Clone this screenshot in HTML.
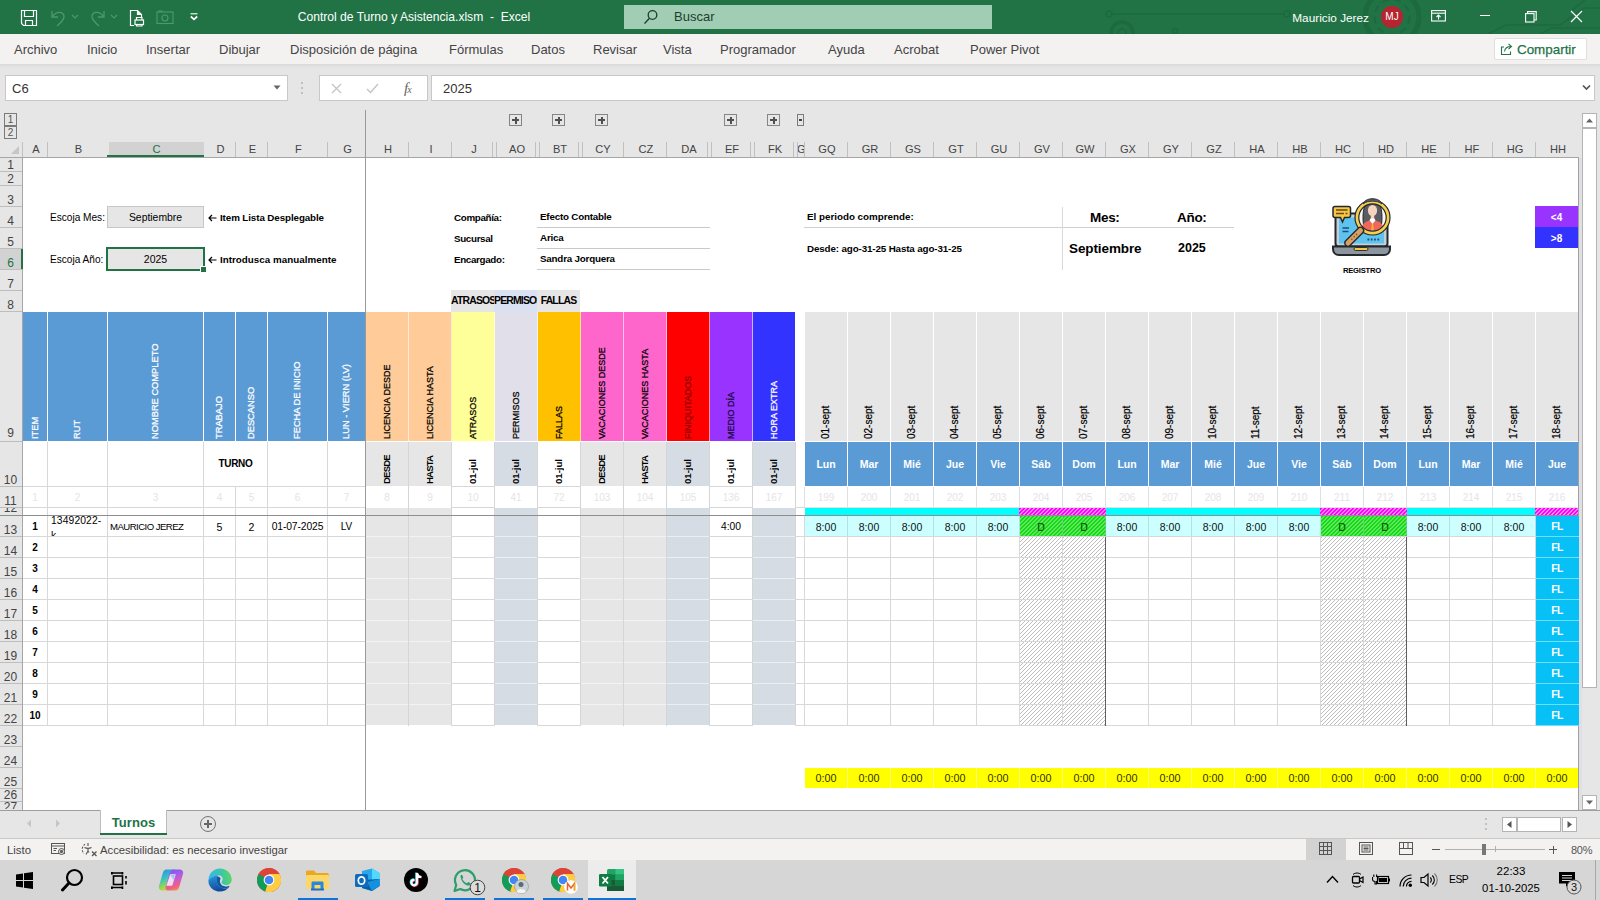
<!DOCTYPE html>
<html lang="es"><head><meta charset="utf-8"><title>Control de Turno y Asistencia.xlsm - Excel</title>
<style>
html,body{margin:0;padding:0;background:#fff;}
body{width:1600px;height:900px;overflow:hidden;position:relative;font-family:"Liberation Sans",sans-serif;color:#000;}
#app{position:absolute;left:0;top:0;width:1600px;height:900px;overflow:hidden;}
#app div{position:absolute;white-space:nowrap;}
#app i{display:block;}
.vt{writing-mode:vertical-rl;transform:rotate(180deg);text-align:left;white-space:nowrap;overflow:visible;}
</style></head>
<body><div id="app">
<div style="left:0px;top:0px;width:1600px;height:34px;background:#217346;"></div>
<svg style="position:absolute;left:1080px;top:0" width="520" height="34" viewBox="1080 0 520 34" fill="none" stroke="#1c6a3e" stroke-width="1.6">
<circle cx="1109" cy="14" r="3"/><path d="M1112 14H1284"/><circle cx="1287" cy="14" r="3"/>
<circle cx="1122" cy="33" r="11" stroke-width="3.5"/><circle cx="1122" cy="33" r="4"/><circle cx="1175" cy="31" r="2.5"/>
<circle cx="1392" cy="17" r="27" stroke-width="5"/><circle cx="1392" cy="17" r="17.5" stroke-width="2" stroke-dasharray="7 5"/>
<path d="M1488 34L1506 25H1560L1584 8H1600"/><path d="M1540 34L1552 28H1600"/><path d="M1585 0L1572 10"/></svg>
<svg style="position:absolute;left:20px;top:9px" width="18" height="18" viewBox="0 0 18 18" fill="none" stroke="#fff" stroke-width="1.2">
<path d="M1.5 1.5H16.5V16.5H3.5L1.5 14.5Z"/><path d="M4.5 1.5V7.5H13.5V1.5"/><path d="M5.5 16.5V11.5H12.5V16.5"/></svg>
<svg style="position:absolute;left:50px;top:9px" width="30" height="18" viewBox="0 0 30 18" fill="none" stroke="#4f9671" stroke-width="1.3">
<path d="M2 2V8H8"/><path d="M2.5 7.5C6 2 13 2 14 7C14.6 11 10 14 7 17"/><path d="M22 6L25 9L28 6" stroke-width="1.1"/></svg>
<svg style="position:absolute;left:88px;top:9px" width="32" height="18" viewBox="0 0 32 18" fill="none" stroke="#4f9671" stroke-width="1.3">
<path d="M16 2V8H10"/><path d="M15.5 7.5C12 2 5 2 4 7C3.4 11 8 14 11 17"/><path d="M23 6L26 9L29 6" stroke-width="1.1"/></svg>
<svg style="position:absolute;left:129px;top:9px" width="16" height="18" viewBox="0 0 16 18" fill="none" stroke="#fff" stroke-width="1.2">
<path d="M5 16.5H1.5V1.5H8.5L12.5 5.5V8"/><path d="M8.5 1.5V5.5H12.5" fill="#fff"/><rect x="6" y="11" width="8.5" height="4.5"/><path d="M7.5 11V8.5H13V11"/><path d="M7.5 15.5V17H13V15.5"/></svg>
<svg style="position:absolute;left:156px;top:10px" width="18" height="15" viewBox="0 0 18 15" fill="none" stroke="#4f9872" stroke-width="1.1">
<rect x="1" y="2" width="16" height="11.5"/><circle cx="9" cy="8" r="3"/><path d="M3 2V1H6V2"/></svg>
<svg style="position:absolute;left:189px;top:13px" width="10" height="8" viewBox="0 0 10 8" fill="none" stroke="#fff"><path d="M1.5 0.8H8.5" stroke-width="1.1"/><path d="M1.8 3.5L5 6.3L8.2 3.5" stroke-width="1.7"/></svg>
<div style="left:260px;top:7px;width:308px;height:20px;color:#fff;font-size:12.1px;line-height:20px;text-align:center;white-space:pre;">Control de Turno y Asistencia.xlsm  -  Excel</div>
<div style="left:624px;top:5px;width:368px;height:24px;background:#a0cdb4;"></div>
<svg style="position:absolute;left:643px;top:9px" width="16" height="16" viewBox="0 0 16 16" fill="none" stroke="#1f3d2d" stroke-width="1.3"><circle cx="9.5" cy="6" r="4.3"/><path d="M6.5 9.2L1.5 14.5"/></svg>
<div style="left:674px;top:7px;width:80px;height:20px;color:#1f3d2d;font-size:13px;line-height:20px;">Buscar</div>
<div style="left:1279px;top:8px;width:90px;height:20px;color:#fff;font-size:11.8px;line-height:20px;text-align:right;">Mauricio Jerez</div>
<div style="left:1381px;top:6px;width:22px;height:22px;background:#b5242f;border-radius:50%;color:#fff;font-size:10px;line-height:22px;text-align:center;">MJ</div>
<svg style="position:absolute;left:1431px;top:10px" width="15" height="12" viewBox="0 0 15 12" fill="none" stroke="#fff" stroke-width="1.1"><rect x="0.6" y="0.6" width="13.8" height="10.4"/><path d="M0.6 3.2H14.4"/><path d="M7.5 9.5V5M5.5 7L7.5 5L9.5 7"/></svg>
<div style="left:1480px;top:15px;width:10px;height:1px;background:#fff;"></div>
<svg style="position:absolute;left:1525px;top:11px" width="12" height="12" viewBox="0 0 12 12" fill="none" stroke="#fff" stroke-width="1.1"><rect x="0.6" y="2.6" width="8.4" height="8.4"/><path d="M2.6 2.6V0.6H11.2V9H9"/></svg>
<svg style="position:absolute;left:1570px;top:10px" width="13" height="13" viewBox="0 0 13 13" fill="none" stroke="#fff" stroke-width="1.2"><path d="M1 1L12 12M12 1L1 12"/></svg>
<div style="left:0px;top:34px;width:1600px;height:30px;background:#f3f2f1;"></div>
<div style="left:0px;top:64px;width:1600px;height:4px;background:linear-gradient(#dadada,#e6e6e6);"></div>
<div style="left:14px;top:40px;width:200px;height:20px;color:#444;font-size:13px;line-height:20px;white-space:nowrap;">Archivo</div>
<div style="left:87px;top:40px;width:200px;height:20px;color:#444;font-size:13px;line-height:20px;white-space:nowrap;">Inicio</div>
<div style="left:146px;top:40px;width:200px;height:20px;color:#444;font-size:13px;line-height:20px;white-space:nowrap;">Insertar</div>
<div style="left:219px;top:40px;width:200px;height:20px;color:#444;font-size:13px;line-height:20px;white-space:nowrap;">Dibujar</div>
<div style="left:290px;top:40px;width:200px;height:20px;color:#444;font-size:13px;line-height:20px;white-space:nowrap;">Disposición de página</div>
<div style="left:449px;top:40px;width:200px;height:20px;color:#444;font-size:13px;line-height:20px;white-space:nowrap;">Fórmulas</div>
<div style="left:531px;top:40px;width:200px;height:20px;color:#444;font-size:13px;line-height:20px;white-space:nowrap;">Datos</div>
<div style="left:593px;top:40px;width:200px;height:20px;color:#444;font-size:13px;line-height:20px;white-space:nowrap;">Revisar</div>
<div style="left:663px;top:40px;width:200px;height:20px;color:#444;font-size:13px;line-height:20px;white-space:nowrap;">Vista</div>
<div style="left:720px;top:40px;width:200px;height:20px;color:#444;font-size:13px;line-height:20px;white-space:nowrap;">Programador</div>
<div style="left:828px;top:40px;width:200px;height:20px;color:#444;font-size:13px;line-height:20px;white-space:nowrap;">Ayuda</div>
<div style="left:894px;top:40px;width:200px;height:20px;color:#444;font-size:13px;line-height:20px;white-space:nowrap;">Acrobat</div>
<div style="left:970px;top:40px;width:200px;height:20px;color:#444;font-size:13px;line-height:20px;white-space:nowrap;">Power Pivot</div>
<div style="left:1494px;top:38px;width:93px;height:22px;background:#fff;border:1px solid #e1dfdd;box-sizing:border-box;border-radius:2px;"></div>
<svg style="position:absolute;left:1500px;top:42px" width="14" height="14" viewBox="0 0 14 14" fill="none" stroke="#217346" stroke-width="1.1"><path d="M4 5H1.5V12.5H10.5V9.5"/><path d="M4.5 9.5C5 6 7.5 4.5 11 4.5M8.5 1.8L11.5 4.5L8.5 7.2"/></svg>
<div style="left:1517px;top:40px;width:70px;height:20px;color:#217346;font-size:13.4px;line-height:20px;-webkit-text-stroke:0.25px #217346;">Compartir</div>
<div style="left:0px;top:68px;width:1600px;height:90px;background:#e6e6e6;"></div>
<div style="left:5px;top:75px;width:283px;height:26px;background:#fff;border:1px solid #c8c8c8;box-sizing:border-box;"></div>
<div style="left:12px;top:79px;width:60px;height:20px;color:#333;font-size:13px;line-height:20px;">C6</div>
<svg style="position:absolute;left:273px;top:85px" width="8" height="5" viewBox="0 0 8 5" fill="#666"><path d="M0.5 0.5H7.5L4 4.5Z"/></svg>
<div style="left:301px;top:82px;width:2px;height:2px;background:#c0c0c0;"></div>
<div style="left:301px;top:87px;width:2px;height:2px;background:#c0c0c0;"></div>
<div style="left:301px;top:92px;width:2px;height:2px;background:#c0c0c0;"></div>
<div style="left:319px;top:75px;width:109px;height:26px;background:#fff;border:1px solid #c8c8c8;box-sizing:border-box;"></div>
<svg style="position:absolute;left:331px;top:83px" width="11" height="11" viewBox="0 0 11 11" fill="none" stroke="#c4c4c4" stroke-width="1.3"><path d="M1 1L10 10M10 1L1 10"/></svg>
<svg style="position:absolute;left:366px;top:83px" width="13" height="11" viewBox="0 0 13 11" fill="none" stroke="#c4c4c4" stroke-width="1.4"><path d="M1 6L4.5 9.5L12 1"/></svg>
<div style="left:404px;top:77px;width:18px;height:22px;color:#666;font-size:15px;line-height:22px;font-style:italic;font-family:'Liberation Serif',serif;letter-spacing:-1px;">f<span style="font-size:10px;">x</span></div>
<div style="left:431px;top:75px;width:1164px;height:26px;background:#fff;border:1px solid #c8c8c8;box-sizing:border-box;"></div>
<div style="left:443px;top:79px;width:80px;height:20px;color:#333;font-size:13px;line-height:20px;">2025</div>
<svg style="position:absolute;left:1582px;top:84px" width="9" height="7" viewBox="0 0 9 7" fill="none" stroke="#555" stroke-width="1.7"><path d="M1 1.5L4.5 5L8 1.5"/></svg>
<div style="left:4px;top:113px;width:13px;height:13px;border:1px solid #7a7a7a;box-sizing:border-box;background:#e6e6e6;"><span style="position:absolute;left:0;top:0;width:11px;text-align:center;color:#555;font-size:10px;line-height:11px;">1</span></div>
<div style="left:4px;top:126px;width:13px;height:13px;border:1px solid #7a7a7a;box-sizing:border-box;background:#e6e6e6;"><span style="position:absolute;left:0;top:0;width:11px;text-align:center;color:#555;font-size:10px;line-height:11px;">2</span></div>
<div style="left:509px;top:114px;width:13px;height:12px;border:1px solid #858585;box-sizing:border-box;background:#e6e6e6;"><i style="position:absolute;left:2px;top:4px;width:7px;height:2px;background:#505050"></i><i style="position:absolute;left:4.5px;top:1.5px;width:2px;height:7px;background:#505050"></i></div>
<div style="left:552px;top:114px;width:13px;height:12px;border:1px solid #858585;box-sizing:border-box;background:#e6e6e6;"><i style="position:absolute;left:2px;top:4px;width:7px;height:2px;background:#505050"></i><i style="position:absolute;left:4.5px;top:1.5px;width:2px;height:7px;background:#505050"></i></div>
<div style="left:595px;top:114px;width:13px;height:12px;border:1px solid #858585;box-sizing:border-box;background:#e6e6e6;"><i style="position:absolute;left:2px;top:4px;width:7px;height:2px;background:#505050"></i><i style="position:absolute;left:4.5px;top:1.5px;width:2px;height:7px;background:#505050"></i></div>
<div style="left:724px;top:114px;width:13px;height:12px;border:1px solid #858585;box-sizing:border-box;background:#e6e6e6;"><i style="position:absolute;left:2px;top:4px;width:7px;height:2px;background:#505050"></i><i style="position:absolute;left:4.5px;top:1.5px;width:2px;height:7px;background:#505050"></i></div>
<div style="left:767px;top:114px;width:13px;height:12px;border:1px solid #858585;box-sizing:border-box;background:#e6e6e6;"><i style="position:absolute;left:2px;top:4px;width:7px;height:2px;background:#505050"></i><i style="position:absolute;left:4.5px;top:1.5px;width:2px;height:7px;background:#505050"></i></div>
<div style="left:797px;top:114px;width:7px;height:12px;border:1px solid #7a7a7a;box-sizing:border-box;"><i style="position:absolute;left:1px;top:4px;width:3px;height:2px;background:#444"></i></div>
<svg style="position:absolute;left:11px;top:146px" width="8" height="8" viewBox="0 0 8 8"><path d="M8 0V8H0Z" fill="#c6c6c6"/></svg>
<div class="ch" style="left:24px;top:142px;width:24px;height:15px;font-size:11.1px;line-height:14px;text-align:center;color:#444;overflow:hidden;">A</div>
<div class="ch" style="left:49px;top:142px;width:59px;height:15px;font-size:11.1px;line-height:14px;text-align:center;color:#444;overflow:hidden;">B</div>
<div class="ch" style="left:109px;top:142px;width:95px;height:15px;font-size:11.1px;line-height:14px;text-align:center;color:#444;overflow:hidden;background:#d2d2d2;color:#217346;">C</div>
<div class="ch" style="left:205px;top:142px;width:31px;height:15px;font-size:11.1px;line-height:14px;text-align:center;color:#444;overflow:hidden;">D</div>
<div class="ch" style="left:237px;top:142px;width:31px;height:15px;font-size:11.1px;line-height:14px;text-align:center;color:#444;overflow:hidden;">E</div>
<div class="ch" style="left:269px;top:142px;width:59px;height:15px;font-size:11.1px;line-height:14px;text-align:center;color:#444;overflow:hidden;">F</div>
<div class="ch" style="left:329px;top:142px;width:37px;height:15px;font-size:11.1px;line-height:14px;text-align:center;color:#444;overflow:hidden;">G</div>
<div class="ch" style="left:367px;top:142px;width:42px;height:15px;font-size:11.1px;line-height:14px;text-align:center;color:#444;overflow:hidden;">H</div>
<div class="ch" style="left:410px;top:142px;width:42px;height:15px;font-size:11.1px;line-height:14px;text-align:center;color:#444;overflow:hidden;">I</div>
<div class="ch" style="left:453px;top:142px;width:42px;height:15px;font-size:11.1px;line-height:14px;text-align:center;color:#444;overflow:hidden;">J</div>
<div class="ch" style="left:496px;top:142px;width:42px;height:15px;font-size:11.1px;line-height:14px;text-align:center;color:#444;overflow:hidden;">AO</div>
<div class="ch" style="left:539px;top:142px;width:42px;height:15px;font-size:11.1px;line-height:14px;text-align:center;color:#444;overflow:hidden;">BT</div>
<div class="ch" style="left:582px;top:142px;width:42px;height:15px;font-size:11.1px;line-height:14px;text-align:center;color:#444;overflow:hidden;">CY</div>
<div class="ch" style="left:625px;top:142px;width:42px;height:15px;font-size:11.1px;line-height:14px;text-align:center;color:#444;overflow:hidden;">CZ</div>
<div class="ch" style="left:668px;top:142px;width:42px;height:15px;font-size:11.1px;line-height:14px;text-align:center;color:#444;overflow:hidden;">DA</div>
<div class="ch" style="left:711px;top:142px;width:42px;height:15px;font-size:11.1px;line-height:14px;text-align:center;color:#444;overflow:hidden;">EF</div>
<div class="ch" style="left:754px;top:142px;width:42px;height:15px;font-size:11.1px;line-height:14px;text-align:center;color:#444;overflow:hidden;">FK</div>
<div class="ch" style="left:797px;top:142px;width:8px;height:15px;font-size:11.1px;line-height:14px;text-align:center;color:#444;overflow:hidden;text-align:left;">G</div>
<div class="ch" style="left:806px;top:142px;width:42px;height:15px;font-size:11.1px;line-height:14px;text-align:center;color:#444;overflow:hidden;">GQ</div>
<div class="ch" style="left:849px;top:142px;width:42px;height:15px;font-size:11.1px;line-height:14px;text-align:center;color:#444;overflow:hidden;">GR</div>
<div class="ch" style="left:892px;top:142px;width:42px;height:15px;font-size:11.1px;line-height:14px;text-align:center;color:#444;overflow:hidden;">GS</div>
<div class="ch" style="left:935px;top:142px;width:42px;height:15px;font-size:11.1px;line-height:14px;text-align:center;color:#444;overflow:hidden;">GT</div>
<div class="ch" style="left:978px;top:142px;width:42px;height:15px;font-size:11.1px;line-height:14px;text-align:center;color:#444;overflow:hidden;">GU</div>
<div class="ch" style="left:1021px;top:142px;width:42px;height:15px;font-size:11.1px;line-height:14px;text-align:center;color:#444;overflow:hidden;">GV</div>
<div class="ch" style="left:1064px;top:142px;width:42px;height:15px;font-size:11.1px;line-height:14px;text-align:center;color:#444;overflow:hidden;">GW</div>
<div class="ch" style="left:1107px;top:142px;width:42px;height:15px;font-size:11.1px;line-height:14px;text-align:center;color:#444;overflow:hidden;">GX</div>
<div class="ch" style="left:1150px;top:142px;width:42px;height:15px;font-size:11.1px;line-height:14px;text-align:center;color:#444;overflow:hidden;">GY</div>
<div class="ch" style="left:1193px;top:142px;width:42px;height:15px;font-size:11.1px;line-height:14px;text-align:center;color:#444;overflow:hidden;">GZ</div>
<div class="ch" style="left:1236px;top:142px;width:42px;height:15px;font-size:11.1px;line-height:14px;text-align:center;color:#444;overflow:hidden;">HA</div>
<div class="ch" style="left:1279px;top:142px;width:42px;height:15px;font-size:11.1px;line-height:14px;text-align:center;color:#444;overflow:hidden;">HB</div>
<div class="ch" style="left:1322px;top:142px;width:42px;height:15px;font-size:11.1px;line-height:14px;text-align:center;color:#444;overflow:hidden;">HC</div>
<div class="ch" style="left:1365px;top:142px;width:42px;height:15px;font-size:11.1px;line-height:14px;text-align:center;color:#444;overflow:hidden;">HD</div>
<div class="ch" style="left:1408px;top:142px;width:42px;height:15px;font-size:11.1px;line-height:14px;text-align:center;color:#444;overflow:hidden;">HE</div>
<div class="ch" style="left:1451px;top:142px;width:42px;height:15px;font-size:11.1px;line-height:14px;text-align:center;color:#444;overflow:hidden;">HF</div>
<div class="ch" style="left:1494px;top:142px;width:42px;height:15px;font-size:11.1px;line-height:14px;text-align:center;color:#444;overflow:hidden;">HG</div>
<div class="ch" style="left:1537px;top:142px;width:42px;height:15px;font-size:11.1px;line-height:14px;text-align:center;color:#444;overflow:hidden;">HH</div>
<div style="left:47px;top:142px;width:1px;height:15px;background:#c0c0c0;"></div>
<div style="left:235px;top:142px;width:1px;height:15px;background:#c0c0c0;"></div>
<div style="left:267px;top:142px;width:1px;height:15px;background:#c0c0c0;"></div>
<div style="left:327px;top:142px;width:1px;height:15px;background:#c0c0c0;"></div>
<div style="left:408px;top:142px;width:1px;height:15px;background:#c0c0c0;"></div>
<div style="left:451px;top:142px;width:1px;height:15px;background:#c0c0c0;"></div>
<div style="left:492px;top:142px;width:1px;height:15px;background:#c0c0c0;"></div>
<div style="left:496px;top:142px;width:1px;height:15px;background:#c0c0c0;"></div>
<div style="left:535px;top:142px;width:1px;height:15px;background:#c0c0c0;"></div>
<div style="left:539px;top:142px;width:1px;height:15px;background:#c0c0c0;"></div>
<div style="left:578px;top:142px;width:1px;height:15px;background:#c0c0c0;"></div>
<div style="left:582px;top:142px;width:1px;height:15px;background:#c0c0c0;"></div>
<div style="left:623px;top:142px;width:1px;height:15px;background:#c0c0c0;"></div>
<div style="left:666px;top:142px;width:1px;height:15px;background:#c0c0c0;"></div>
<div style="left:707px;top:142px;width:1px;height:15px;background:#c0c0c0;"></div>
<div style="left:711px;top:142px;width:1px;height:15px;background:#c0c0c0;"></div>
<div style="left:750px;top:142px;width:1px;height:15px;background:#c0c0c0;"></div>
<div style="left:754px;top:142px;width:1px;height:15px;background:#c0c0c0;"></div>
<div style="left:793px;top:142px;width:1px;height:15px;background:#c0c0c0;"></div>
<div style="left:797px;top:142px;width:1px;height:15px;background:#c0c0c0;"></div>
<div style="left:804px;top:142px;width:1px;height:15px;background:#c0c0c0;"></div>
<div style="left:847px;top:142px;width:1px;height:15px;background:#c0c0c0;"></div>
<div style="left:890px;top:142px;width:1px;height:15px;background:#c0c0c0;"></div>
<div style="left:933px;top:142px;width:1px;height:15px;background:#c0c0c0;"></div>
<div style="left:976px;top:142px;width:1px;height:15px;background:#c0c0c0;"></div>
<div style="left:1019px;top:142px;width:1px;height:15px;background:#c0c0c0;"></div>
<div style="left:1062px;top:142px;width:1px;height:15px;background:#c0c0c0;"></div>
<div style="left:1105px;top:142px;width:1px;height:15px;background:#c0c0c0;"></div>
<div style="left:1148px;top:142px;width:1px;height:15px;background:#c0c0c0;"></div>
<div style="left:1191px;top:142px;width:1px;height:15px;background:#c0c0c0;"></div>
<div style="left:1234px;top:142px;width:1px;height:15px;background:#c0c0c0;"></div>
<div style="left:1277px;top:142px;width:1px;height:15px;background:#c0c0c0;"></div>
<div style="left:1320px;top:142px;width:1px;height:15px;background:#c0c0c0;"></div>
<div style="left:1363px;top:142px;width:1px;height:15px;background:#c0c0c0;"></div>
<div style="left:1406px;top:142px;width:1px;height:15px;background:#c0c0c0;"></div>
<div style="left:1449px;top:142px;width:1px;height:15px;background:#c0c0c0;"></div>
<div style="left:1492px;top:142px;width:1px;height:15px;background:#c0c0c0;"></div>
<div style="left:1535px;top:142px;width:1px;height:15px;background:#c0c0c0;"></div>
<div style="left:22px;top:142px;width:1px;height:15px;background:#c0c0c0;"></div>
<div style="left:0px;top:157px;width:1579px;height:1px;background:#a6a6a6;"></div>
<div style="left:107px;top:155px;width:97px;height:2px;background:#217346;"></div>
<div style="left:0px;top:158px;width:23px;height:652px;background:#e6e6e6;"></div>
<div class="rh" style="left:0px;top:158px;width:22px;height:13px;font-size:12px;color:#444;text-align:center;overflow:hidden;"><span style="position:absolute;left:0;width:21px;bottom:-1px;line-height:14px;">1</span></div>
<div style="left:0px;top:171px;width:22px;height:1px;background:#bdbdbd;"></div>
<div class="rh" style="left:0px;top:172px;width:22px;height:13px;font-size:12px;color:#444;text-align:center;overflow:hidden;"><span style="position:absolute;left:0;width:21px;bottom:-1px;line-height:14px;">2</span></div>
<div style="left:0px;top:185px;width:22px;height:1px;background:#bdbdbd;"></div>
<div class="rh" style="left:0px;top:186px;width:22px;height:20px;font-size:12px;color:#444;text-align:center;overflow:hidden;"><span style="position:absolute;left:0;width:21px;bottom:-1px;line-height:14px;">3</span></div>
<div style="left:0px;top:206px;width:22px;height:1px;background:#bdbdbd;"></div>
<div class="rh" style="left:0px;top:207px;width:22px;height:20px;font-size:12px;color:#444;text-align:center;overflow:hidden;"><span style="position:absolute;left:0;width:21px;bottom:-1px;line-height:14px;">4</span></div>
<div style="left:0px;top:227px;width:22px;height:1px;background:#bdbdbd;"></div>
<div class="rh" style="left:0px;top:228px;width:22px;height:20px;font-size:12px;color:#444;text-align:center;overflow:hidden;"><span style="position:absolute;left:0;width:21px;bottom:-1px;line-height:14px;">5</span></div>
<div style="left:0px;top:248px;width:22px;height:1px;background:#bdbdbd;"></div>
<div class="rh" style="left:0px;top:249px;width:22px;height:20px;font-size:12px;color:#444;text-align:center;overflow:hidden;background:#d2d2d2;color:#217346;"><span style="position:absolute;left:0;width:21px;bottom:-1px;line-height:14px;">6</span></div>
<div style="left:0px;top:269px;width:22px;height:1px;background:#bdbdbd;"></div>
<div class="rh" style="left:0px;top:270px;width:22px;height:20px;font-size:12px;color:#444;text-align:center;overflow:hidden;"><span style="position:absolute;left:0;width:21px;bottom:-1px;line-height:14px;">7</span></div>
<div style="left:0px;top:290px;width:22px;height:1px;background:#bdbdbd;"></div>
<div class="rh" style="left:0px;top:291px;width:22px;height:20px;font-size:12px;color:#444;text-align:center;overflow:hidden;"><span style="position:absolute;left:0;width:21px;bottom:-1px;line-height:14px;">8</span></div>
<div style="left:0px;top:311px;width:22px;height:1px;background:#bdbdbd;"></div>
<div class="rh" style="left:0px;top:312px;width:22px;height:129px;font-size:12px;color:#444;text-align:center;overflow:hidden;"><span style="position:absolute;left:0;width:21px;bottom:1px;line-height:14px;">9</span></div>
<div style="left:0px;top:441px;width:22px;height:1px;background:#bdbdbd;"></div>
<div class="rh" style="left:0px;top:442px;width:22px;height:44px;font-size:12px;color:#444;text-align:center;overflow:hidden;"><span style="position:absolute;left:0;width:21px;bottom:-1px;line-height:14px;">10</span></div>
<div style="left:0px;top:486px;width:22px;height:1px;background:#bdbdbd;"></div>
<div class="rh" style="left:0px;top:487px;width:22px;height:20px;font-size:12px;color:#444;text-align:center;overflow:hidden;"><span style="position:absolute;left:0;width:21px;bottom:-1px;line-height:14px;">11</span></div>
<div style="left:0px;top:507px;width:22px;height:1px;background:#bdbdbd;"></div>
<div class="rh" style="left:0px;top:508px;width:22px;height:7px;font-size:12px;color:#444;text-align:center;overflow:hidden;"><span style="position:absolute;left:0;width:21px;bottom:0px;line-height:14px;">12</span></div>
<div style="left:0px;top:515px;width:22px;height:1px;background:#bdbdbd;"></div>
<div class="rh" style="left:0px;top:516px;width:22px;height:20px;font-size:12px;color:#444;text-align:center;overflow:hidden;"><span style="position:absolute;left:0;width:21px;bottom:-1px;line-height:14px;">13</span></div>
<div style="left:0px;top:536px;width:22px;height:1px;background:#bdbdbd;"></div>
<div class="rh" style="left:0px;top:537px;width:22px;height:20px;font-size:12px;color:#444;text-align:center;overflow:hidden;"><span style="position:absolute;left:0;width:21px;bottom:-1px;line-height:14px;">14</span></div>
<div style="left:0px;top:557px;width:22px;height:1px;background:#bdbdbd;"></div>
<div class="rh" style="left:0px;top:558px;width:22px;height:20px;font-size:12px;color:#444;text-align:center;overflow:hidden;"><span style="position:absolute;left:0;width:21px;bottom:-1px;line-height:14px;">15</span></div>
<div style="left:0px;top:578px;width:22px;height:1px;background:#bdbdbd;"></div>
<div class="rh" style="left:0px;top:579px;width:22px;height:20px;font-size:12px;color:#444;text-align:center;overflow:hidden;"><span style="position:absolute;left:0;width:21px;bottom:-1px;line-height:14px;">16</span></div>
<div style="left:0px;top:599px;width:22px;height:1px;background:#bdbdbd;"></div>
<div class="rh" style="left:0px;top:600px;width:22px;height:20px;font-size:12px;color:#444;text-align:center;overflow:hidden;"><span style="position:absolute;left:0;width:21px;bottom:-1px;line-height:14px;">17</span></div>
<div style="left:0px;top:620px;width:22px;height:1px;background:#bdbdbd;"></div>
<div class="rh" style="left:0px;top:621px;width:22px;height:20px;font-size:12px;color:#444;text-align:center;overflow:hidden;"><span style="position:absolute;left:0;width:21px;bottom:-1px;line-height:14px;">18</span></div>
<div style="left:0px;top:641px;width:22px;height:1px;background:#bdbdbd;"></div>
<div class="rh" style="left:0px;top:642px;width:22px;height:20px;font-size:12px;color:#444;text-align:center;overflow:hidden;"><span style="position:absolute;left:0;width:21px;bottom:-1px;line-height:14px;">19</span></div>
<div style="left:0px;top:662px;width:22px;height:1px;background:#bdbdbd;"></div>
<div class="rh" style="left:0px;top:663px;width:22px;height:20px;font-size:12px;color:#444;text-align:center;overflow:hidden;"><span style="position:absolute;left:0;width:21px;bottom:-1px;line-height:14px;">20</span></div>
<div style="left:0px;top:683px;width:22px;height:1px;background:#bdbdbd;"></div>
<div class="rh" style="left:0px;top:684px;width:22px;height:20px;font-size:12px;color:#444;text-align:center;overflow:hidden;"><span style="position:absolute;left:0;width:21px;bottom:-1px;line-height:14px;">21</span></div>
<div style="left:0px;top:704px;width:22px;height:1px;background:#bdbdbd;"></div>
<div class="rh" style="left:0px;top:705px;width:22px;height:20px;font-size:12px;color:#444;text-align:center;overflow:hidden;"><span style="position:absolute;left:0;width:21px;bottom:-1px;line-height:14px;">22</span></div>
<div style="left:0px;top:725px;width:22px;height:1px;background:#bdbdbd;"></div>
<div class="rh" style="left:0px;top:726px;width:22px;height:20px;font-size:12px;color:#444;text-align:center;overflow:hidden;"><span style="position:absolute;left:0;width:21px;bottom:-1px;line-height:14px;">23</span></div>
<div style="left:0px;top:746px;width:22px;height:1px;background:#bdbdbd;"></div>
<div class="rh" style="left:0px;top:747px;width:22px;height:20px;font-size:12px;color:#444;text-align:center;overflow:hidden;"><span style="position:absolute;left:0;width:21px;bottom:-1px;line-height:14px;">24</span></div>
<div style="left:0px;top:767px;width:22px;height:1px;background:#bdbdbd;"></div>
<div class="rh" style="left:0px;top:768px;width:22px;height:20px;font-size:12px;color:#444;text-align:center;overflow:hidden;"><span style="position:absolute;left:0;width:21px;bottom:-1px;line-height:14px;">25</span></div>
<div style="left:0px;top:788px;width:22px;height:1px;background:#bdbdbd;"></div>
<div class="rh" style="left:0px;top:789px;width:22px;height:12px;font-size:12px;color:#444;text-align:center;overflow:hidden;"><span style="position:absolute;left:0;width:21px;bottom:-1px;line-height:14px;">26</span></div>
<div style="left:0px;top:801px;width:22px;height:1px;background:#bdbdbd;"></div>
<div class="rh" style="left:0px;top:802px;width:22px;height:7px;font-size:12px;color:#444;text-align:center;overflow:hidden;"><span style="position:absolute;left:0;width:21px;bottom:-5px;line-height:14px;">27</span></div>
<div style="left:22px;top:158px;width:1px;height:652px;background:#a6a6a6;"></div>
<div style="left:21px;top:249px;width:2px;height:20px;background:#217346;"></div>
<div style="left:23px;top:158px;width:1555px;height:652px;background:#fff;"></div>
<div style="left:50px;top:207px;width:60px;height:21px;font-size:10.1px;line-height:21px;">Escoja Mes:</div>
<div style="left:50px;top:249px;width:60px;height:21px;font-size:10.1px;line-height:21px;">Escoja Año:</div>
<div style="left:107px;top:206px;width:97px;height:22px;background:#e7e6e6;border:1px solid #c6c6c6;box-sizing:border-box;font-size:10.4px;line-height:21px;text-align:center;">Septiembre</div>
<div style="left:106px;top:247px;width:99px;height:24px;background:#e7e6e6;border:2px solid #217346;box-sizing:border-box;font-size:10.5px;line-height:21px;text-align:center;">2025</div>
<div style="left:200px;top:266px;width:5px;height:5px;background:#217346;border:1px solid #fff;border-right:none;border-bottom:none;box-sizing:content-box;"></div>
<div style="left:208px;top:207px;width:150px;height:21px;font-size:9.8px;line-height:21px;font-weight:bold;letter-spacing:-0.1px;"><svg width="9" height="8" viewBox="0 0 9 8" style="position:absolute;left:0;top:7px" fill="none" stroke="#000" stroke-width="1.2"><path d="M8.5 4H1M4 1L1 4L4 7"/></svg><span style="margin-left:12px">Item Lista Desplegable</span></div>
<div style="left:208px;top:249px;width:150px;height:21px;font-size:9.8px;line-height:21px;font-weight:bold;letter-spacing:-0.1px;letter-spacing:0.02px;"><svg width="9" height="8" viewBox="0 0 9 8" style="position:absolute;left:0;top:7px" fill="none" stroke="#000" stroke-width="1.2"><path d="M8.5 4H1M4 1L1 4L4 7"/></svg><span style="margin-left:12px">Introdusca manualmente</span></div>
<div style="left:454px;top:207px;width:80px;height:21px;font-size:9.8px;line-height:21px;font-weight:bold;letter-spacing:-0.33px;">Compañía:</div>
<div style="left:454px;top:228px;width:80px;height:21px;font-size:9.8px;line-height:21px;font-weight:bold;letter-spacing:-0.33px;">Sucursal</div>
<div style="left:454px;top:249px;width:80px;height:21px;font-size:9.8px;line-height:21px;font-weight:bold;letter-spacing:-0.33px;">Encargado:</div>
<div style="left:540px;top:206px;width:160px;height:21px;font-size:9.8px;line-height:21px;font-weight:bold;letter-spacing:-0.2px;">Efecto Contable</div>
<div style="left:537px;top:227px;width:173px;height:1px;background:#c9c9c9;"></div>
<div style="left:540px;top:227px;width:160px;height:21px;font-size:9.8px;line-height:21px;font-weight:bold;letter-spacing:-0.2px;">Arica</div>
<div style="left:537px;top:248px;width:173px;height:1px;background:#c9c9c9;"></div>
<div style="left:540px;top:248px;width:160px;height:21px;font-size:9.8px;line-height:21px;font-weight:bold;letter-spacing:-0.2px;">Sandra Jorquera</div>
<div style="left:537px;top:269px;width:173px;height:1px;background:#c9c9c9;"></div>
<div style="left:451px;top:290px;width:43px;height:22px;background:#e7e6e6;font-size:10.4px;line-height:21px;font-weight:bold;text-align:center;overflow:hidden;white-space:nowrap;letter-spacing:-0.8px;">ATRASOS</div>
<div style="left:494px;top:290px;width:43px;height:22px;background:#d9e1f2;font-size:10.4px;line-height:21px;font-weight:bold;text-align:center;overflow:hidden;white-space:nowrap;letter-spacing:-0.8px;">PERMISOS</div>
<div style="left:537px;top:290px;width:43px;height:22px;background:#e7e6e6;font-size:10.4px;line-height:21px;font-weight:bold;text-align:center;overflow:hidden;white-space:nowrap;letter-spacing:-0.8px;">FALLAS</div>
<div style="left:807px;top:206px;width:250px;height:21px;font-size:9.8px;line-height:21px;font-weight:bold;letter-spacing:0px;">El periodo comprende:</div>
<div style="left:804px;top:227px;width:430px;height:1px;background:#d0d0d0;"></div>
<div style="left:1062px;top:207px;width:1px;height:63px;background:#d9d9d9;"></div>
<div style="left:807px;top:238px;width:250px;height:21px;font-size:9.8px;line-height:21px;font-weight:bold;letter-spacing:-0.13px;">Desde: ago-31-25 Hasta ago-31-25</div>
<div style="left:1090px;top:207px;width:60px;height:21px;font-size:13.5px;line-height:21px;font-weight:bold;letter-spacing:-0.3px;">Mes:</div>
<div style="left:1177px;top:207px;width:60px;height:21px;font-size:13.5px;line-height:21px;font-weight:bold;letter-spacing:-0.3px;">Año:</div>
<div style="left:1069px;top:238px;width:100px;height:21px;font-size:13.5px;line-height:21px;font-weight:bold;letter-spacing:-0.1px;">Septiembre</div>
<div style="left:1178px;top:238px;width:60px;height:21px;font-size:12.5px;line-height:21px;font-weight:bold;">2025</div>
<div style="left:1535px;top:206px;width:43px;height:21px;background:#9933ff;color:#fff;font-size:10px;font-weight:bold;line-height:24px;text-align:center;">&lt;4</div>
<div style="left:1535px;top:227px;width:43px;height:21px;background:#3333ff;color:#fff;font-size:10px;font-weight:bold;line-height:24px;text-align:center;">&gt;8</div>
<div style="left:1332px;top:265px;width:60px;height:12px;font-size:7.6px;line-height:12px;font-weight:bold;text-align:center;letter-spacing:-0.2px;">REGISTRO</div>
<div style="left:23px;top:312px;width:342px;height:129px;background:#5b9bd5;"></div>
<div class="vt" style="left:23px;top:312px;width:24px;height:127px;line-height:24px;color:#fff;font-size:9.3px;letter-spacing:0px;-webkit-text-stroke:0.25px #fff;">ITEM</div>
<div style="left:47px;top:312px;width:1px;height:129px;background:#fff;"></div>
<div class="vt" style="left:48px;top:312px;width:59px;height:127px;line-height:59px;color:#fff;font-size:9.3px;letter-spacing:0px;-webkit-text-stroke:0.25px #fff;">RUT</div>
<div style="left:107px;top:312px;width:1px;height:129px;background:#fff;"></div>
<div class="vt" style="left:108px;top:312px;width:95px;height:127px;line-height:95px;color:#fff;font-size:9.3px;letter-spacing:0px;-webkit-text-stroke:0.25px #fff;">NOMBRE COMPLETO</div>
<div style="left:203px;top:312px;width:1px;height:129px;background:#fff;"></div>
<div class="vt" style="left:204px;top:312px;width:31px;height:127px;line-height:31px;color:#fff;font-size:9.3px;letter-spacing:0px;-webkit-text-stroke:0.25px #fff;">TRABAJO</div>
<div style="left:235px;top:312px;width:1px;height:129px;background:#fff;"></div>
<div class="vt" style="left:236px;top:312px;width:31px;height:127px;line-height:31px;color:#fff;font-size:9.3px;letter-spacing:0px;-webkit-text-stroke:0.25px #fff;">DESCANSO</div>
<div style="left:267px;top:312px;width:1px;height:129px;background:#fff;"></div>
<div class="vt" style="left:268px;top:312px;width:59px;height:127px;line-height:59px;color:#fff;font-size:9.3px;letter-spacing:0px;-webkit-text-stroke:0.25px #fff;">FECHA DE INICIO</div>
<div style="left:327px;top:312px;width:1px;height:129px;background:#fff;"></div>
<div class="vt" style="left:328px;top:312px;width:37px;height:127px;line-height:37px;color:#fff;font-size:9.3px;letter-spacing:0px;-webkit-text-stroke:0.25px #fff;">LUN - VIERN (LV)</div>
<div style="left:366px;top:312px;width:43px;height:129px;background:#ffcc99;"></div>
<div style="left:409px;top:312px;width:43px;height:129px;background:#ffcc99;"></div>
<div style="left:452px;top:312px;width:43px;height:129px;background:#ffff99;"></div>
<div style="left:495px;top:312px;width:43px;height:129px;background:#e1e0ea;"></div>
<div style="left:538px;top:312px;width:43px;height:129px;background:#ffc000;"></div>
<div style="left:581px;top:312px;width:43px;height:129px;background:#ff66cc;"></div>
<div style="left:624px;top:312px;width:43px;height:129px;background:#ff66cc;"></div>
<div style="left:667px;top:312px;width:43px;height:129px;background:#ff0000;"></div>
<div style="left:710px;top:312px;width:43px;height:129px;background:#9933ff;"></div>
<div style="left:753px;top:312px;width:42px;height:129px;background:#3333ff;"></div>
<div class="vt" style="left:366px;top:312px;width:42px;height:127px;line-height:42px;color:#000;font-size:9.0px;letter-spacing:0px;-webkit-text-stroke:0.25px #000;">LICENCIA DESDE</div>
<div style="left:408px;top:312px;width:1px;height:129px;background:rgba(255,255,255,.6);"></div>
<div class="vt" style="left:409px;top:312px;width:42px;height:127px;line-height:42px;color:#000;font-size:9.0px;letter-spacing:0px;-webkit-text-stroke:0.25px #000;">LICENCIA HASTA</div>
<div style="left:451px;top:312px;width:1px;height:129px;background:rgba(255,255,255,.6);"></div>
<div class="vt" style="left:452px;top:312px;width:42px;height:127px;line-height:42px;color:#000;font-size:9.0px;letter-spacing:0px;-webkit-text-stroke:0.25px #000;">ATRASOS</div>
<div style="left:494px;top:312px;width:1px;height:129px;background:rgba(255,255,255,.6);"></div>
<div class="vt" style="left:495px;top:312px;width:42px;height:127px;line-height:42px;color:#000;font-size:9.0px;letter-spacing:0px;-webkit-text-stroke:0.25px #000;">PERMISOS</div>
<div style="left:537px;top:312px;width:1px;height:129px;background:rgba(255,255,255,.6);"></div>
<div class="vt" style="left:538px;top:312px;width:42px;height:127px;line-height:42px;color:#000;font-size:9.0px;letter-spacing:0px;-webkit-text-stroke:0.25px #000;">FALLAS</div>
<div style="left:580px;top:312px;width:1px;height:129px;background:rgba(255,255,255,.6);"></div>
<div class="vt" style="left:581px;top:312px;width:42px;height:127px;line-height:42px;color:#000;font-size:9.0px;letter-spacing:0px;-webkit-text-stroke:0.25px #000;">VACACIONES DESDE</div>
<div style="left:623px;top:312px;width:1px;height:129px;background:rgba(255,255,255,.6);"></div>
<div class="vt" style="left:624px;top:312px;width:42px;height:127px;line-height:42px;color:#000;font-size:9.0px;letter-spacing:0px;-webkit-text-stroke:0.25px #000;">VACACIONES HASTA</div>
<div style="left:666px;top:312px;width:1px;height:129px;background:rgba(255,255,255,.6);"></div>
<div class="vt" style="left:667px;top:312px;width:42px;height:127px;line-height:42px;color:#8a0000;font-size:9.0px;letter-spacing:0px;-webkit-text-stroke:0.25px #8a0000;">FINIQUITADOS</div>
<div style="left:709px;top:312px;width:1px;height:129px;background:rgba(255,255,255,.6);"></div>
<div class="vt" style="left:710px;top:312px;width:42px;height:127px;line-height:42px;color:#1a0a3a;font-size:9.0px;letter-spacing:0px;-webkit-text-stroke:0.25px #1a0a3a;">MEDIO DÍA</div>
<div style="left:752px;top:312px;width:1px;height:129px;background:rgba(255,255,255,.6);"></div>
<div class="vt" style="left:753px;top:312px;width:42px;height:127px;line-height:42px;color:#fff;font-size:9.0px;letter-spacing:0px;-webkit-text-stroke:0.25px #fff;">HORA EXTRA</div>
<div style="left:805px;top:312px;width:773px;height:129px;background:#e7e6e6;"></div>
<div style="left:805px;top:442px;width:773px;height:44px;background:#5b9bd5;"></div>
<div class="vt" style="left:805px;top:312px;width:42px;height:127px;line-height:42px;color:#000;font-size:10px;letter-spacing:0px;-webkit-text-stroke:0.2px #000;">01-sept</div>
<div style="left:805px;top:442px;width:42px;height:44px;color:#fff;font-size:10.5px;font-weight:bold;line-height:45px;text-align:center;">Lun</div>
<div style="left:847px;top:312px;width:1px;height:174px;background:#fff;"></div>
<div style="left:847px;top:487px;width:1px;height:21px;background:#e0e0e0;"></div>
<div class="vt" style="left:848px;top:312px;width:42px;height:127px;line-height:42px;color:#000;font-size:10px;letter-spacing:0px;-webkit-text-stroke:0.2px #000;">02-sept</div>
<div style="left:848px;top:442px;width:42px;height:44px;color:#fff;font-size:10.5px;font-weight:bold;line-height:45px;text-align:center;">Mar</div>
<div style="left:890px;top:312px;width:1px;height:174px;background:#fff;"></div>
<div style="left:890px;top:487px;width:1px;height:21px;background:#e0e0e0;"></div>
<div class="vt" style="left:891px;top:312px;width:42px;height:127px;line-height:42px;color:#000;font-size:10px;letter-spacing:0px;-webkit-text-stroke:0.2px #000;">03-sept</div>
<div style="left:891px;top:442px;width:42px;height:44px;color:#fff;font-size:10.5px;font-weight:bold;line-height:45px;text-align:center;">Mié</div>
<div style="left:933px;top:312px;width:1px;height:174px;background:#fff;"></div>
<div style="left:933px;top:487px;width:1px;height:21px;background:#e0e0e0;"></div>
<div class="vt" style="left:934px;top:312px;width:42px;height:127px;line-height:42px;color:#000;font-size:10px;letter-spacing:0px;-webkit-text-stroke:0.2px #000;">04-sept</div>
<div style="left:934px;top:442px;width:42px;height:44px;color:#fff;font-size:10.5px;font-weight:bold;line-height:45px;text-align:center;">Jue</div>
<div style="left:976px;top:312px;width:1px;height:174px;background:#fff;"></div>
<div style="left:976px;top:487px;width:1px;height:21px;background:#e0e0e0;"></div>
<div class="vt" style="left:977px;top:312px;width:42px;height:127px;line-height:42px;color:#000;font-size:10px;letter-spacing:0px;-webkit-text-stroke:0.2px #000;">05-sept</div>
<div style="left:977px;top:442px;width:42px;height:44px;color:#fff;font-size:10.5px;font-weight:bold;line-height:45px;text-align:center;">Vie</div>
<div style="left:1019px;top:312px;width:1px;height:174px;background:#fff;"></div>
<div style="left:1019px;top:487px;width:1px;height:21px;background:#e0e0e0;"></div>
<div class="vt" style="left:1020px;top:312px;width:42px;height:127px;line-height:42px;color:#000;font-size:10px;letter-spacing:0px;-webkit-text-stroke:0.2px #000;">06-sept</div>
<div style="left:1020px;top:442px;width:42px;height:44px;color:#fff;font-size:10.5px;font-weight:bold;line-height:45px;text-align:center;">Sáb</div>
<div style="left:1062px;top:312px;width:1px;height:174px;background:#fff;"></div>
<div style="left:1062px;top:487px;width:1px;height:21px;background:#e0e0e0;"></div>
<div class="vt" style="left:1063px;top:312px;width:42px;height:127px;line-height:42px;color:#000;font-size:10px;letter-spacing:0px;-webkit-text-stroke:0.2px #000;">07-sept</div>
<div style="left:1063px;top:442px;width:42px;height:44px;color:#fff;font-size:10.5px;font-weight:bold;line-height:45px;text-align:center;">Dom</div>
<div style="left:1105px;top:312px;width:1px;height:174px;background:#fff;"></div>
<div style="left:1105px;top:487px;width:1px;height:21px;background:#e0e0e0;"></div>
<div class="vt" style="left:1106px;top:312px;width:42px;height:127px;line-height:42px;color:#000;font-size:10px;letter-spacing:0px;-webkit-text-stroke:0.2px #000;">08-sept</div>
<div style="left:1106px;top:442px;width:42px;height:44px;color:#fff;font-size:10.5px;font-weight:bold;line-height:45px;text-align:center;">Lun</div>
<div style="left:1148px;top:312px;width:1px;height:174px;background:#fff;"></div>
<div style="left:1148px;top:487px;width:1px;height:21px;background:#e0e0e0;"></div>
<div class="vt" style="left:1149px;top:312px;width:42px;height:127px;line-height:42px;color:#000;font-size:10px;letter-spacing:0px;-webkit-text-stroke:0.2px #000;">09-sept</div>
<div style="left:1149px;top:442px;width:42px;height:44px;color:#fff;font-size:10.5px;font-weight:bold;line-height:45px;text-align:center;">Mar</div>
<div style="left:1191px;top:312px;width:1px;height:174px;background:#fff;"></div>
<div style="left:1191px;top:487px;width:1px;height:21px;background:#e0e0e0;"></div>
<div class="vt" style="left:1192px;top:312px;width:42px;height:127px;line-height:42px;color:#000;font-size:10px;letter-spacing:0px;-webkit-text-stroke:0.2px #000;">10-sept</div>
<div style="left:1192px;top:442px;width:42px;height:44px;color:#fff;font-size:10.5px;font-weight:bold;line-height:45px;text-align:center;">Mié</div>
<div style="left:1234px;top:312px;width:1px;height:174px;background:#fff;"></div>
<div style="left:1234px;top:487px;width:1px;height:21px;background:#e0e0e0;"></div>
<div class="vt" style="left:1235px;top:312px;width:42px;height:127px;line-height:42px;color:#000;font-size:10px;letter-spacing:0px;-webkit-text-stroke:0.2px #000;">11-sept</div>
<div style="left:1235px;top:442px;width:42px;height:44px;color:#fff;font-size:10.5px;font-weight:bold;line-height:45px;text-align:center;">Jue</div>
<div style="left:1277px;top:312px;width:1px;height:174px;background:#fff;"></div>
<div style="left:1277px;top:487px;width:1px;height:21px;background:#e0e0e0;"></div>
<div class="vt" style="left:1278px;top:312px;width:42px;height:127px;line-height:42px;color:#000;font-size:10px;letter-spacing:0px;-webkit-text-stroke:0.2px #000;">12-sept</div>
<div style="left:1278px;top:442px;width:42px;height:44px;color:#fff;font-size:10.5px;font-weight:bold;line-height:45px;text-align:center;">Vie</div>
<div style="left:1320px;top:312px;width:1px;height:174px;background:#fff;"></div>
<div style="left:1320px;top:487px;width:1px;height:21px;background:#e0e0e0;"></div>
<div class="vt" style="left:1321px;top:312px;width:42px;height:127px;line-height:42px;color:#000;font-size:10px;letter-spacing:0px;-webkit-text-stroke:0.2px #000;">13-sept</div>
<div style="left:1321px;top:442px;width:42px;height:44px;color:#fff;font-size:10.5px;font-weight:bold;line-height:45px;text-align:center;">Sáb</div>
<div style="left:1363px;top:312px;width:1px;height:174px;background:#fff;"></div>
<div style="left:1363px;top:487px;width:1px;height:21px;background:#e0e0e0;"></div>
<div class="vt" style="left:1364px;top:312px;width:42px;height:127px;line-height:42px;color:#000;font-size:10px;letter-spacing:0px;-webkit-text-stroke:0.2px #000;">14-sept</div>
<div style="left:1364px;top:442px;width:42px;height:44px;color:#fff;font-size:10.5px;font-weight:bold;line-height:45px;text-align:center;">Dom</div>
<div style="left:1406px;top:312px;width:1px;height:174px;background:#fff;"></div>
<div style="left:1406px;top:487px;width:1px;height:21px;background:#e0e0e0;"></div>
<div class="vt" style="left:1407px;top:312px;width:42px;height:127px;line-height:42px;color:#000;font-size:10px;letter-spacing:0px;-webkit-text-stroke:0.2px #000;">15-sept</div>
<div style="left:1407px;top:442px;width:42px;height:44px;color:#fff;font-size:10.5px;font-weight:bold;line-height:45px;text-align:center;">Lun</div>
<div style="left:1449px;top:312px;width:1px;height:174px;background:#fff;"></div>
<div style="left:1449px;top:487px;width:1px;height:21px;background:#e0e0e0;"></div>
<div class="vt" style="left:1450px;top:312px;width:42px;height:127px;line-height:42px;color:#000;font-size:10px;letter-spacing:0px;-webkit-text-stroke:0.2px #000;">16-sept</div>
<div style="left:1450px;top:442px;width:42px;height:44px;color:#fff;font-size:10.5px;font-weight:bold;line-height:45px;text-align:center;">Mar</div>
<div style="left:1492px;top:312px;width:1px;height:174px;background:#fff;"></div>
<div style="left:1492px;top:487px;width:1px;height:21px;background:#e0e0e0;"></div>
<div class="vt" style="left:1493px;top:312px;width:42px;height:127px;line-height:42px;color:#000;font-size:10px;letter-spacing:0px;-webkit-text-stroke:0.2px #000;">17-sept</div>
<div style="left:1493px;top:442px;width:42px;height:44px;color:#fff;font-size:10.5px;font-weight:bold;line-height:45px;text-align:center;">Mié</div>
<div style="left:1535px;top:312px;width:1px;height:174px;background:#fff;"></div>
<div style="left:1535px;top:487px;width:1px;height:21px;background:#e0e0e0;"></div>
<div class="vt" style="left:1536px;top:312px;width:42px;height:127px;line-height:42px;color:#000;font-size:10px;letter-spacing:0px;-webkit-text-stroke:0.2px #000;">18-sept</div>
<div style="left:1536px;top:442px;width:42px;height:44px;color:#fff;font-size:10.5px;font-weight:bold;line-height:45px;text-align:center;">Jue</div>
<div style="left:1578px;top:487px;width:1px;height:21px;background:#e0e0e0;"></div>
<div style="left:804px;top:487px;width:1px;height:21px;background:#e0e0e0;"></div>
<div style="left:804px;top:507px;width:774px;height:1px;background:#e0e0e0;"></div>
<div style="left:366px;top:442px;width:42px;height:44px;background:#e7e6e6;"></div>
<div class="vt" style="left:366px;top:442px;width:42px;height:42px;line-height:42px;color:#000;font-size:9.6px;font-weight:bold;letter-spacing:-0.85px;">DESDE</div>
<div style="left:366px;top:508px;width:42px;height:217px;background:#e7e6e6;"></div>
<div style="left:409px;top:442px;width:42px;height:44px;background:#e7e6e6;"></div>
<div class="vt" style="left:409px;top:442px;width:42px;height:42px;line-height:42px;color:#000;font-size:9.6px;font-weight:bold;letter-spacing:-0.85px;">HASTA</div>
<div style="left:409px;top:508px;width:42px;height:217px;background:#e7e6e6;"></div>
<div style="left:452px;top:442px;width:42px;height:44px;background:#fff;"></div>
<div class="vt" style="left:452px;top:442px;width:42px;height:42px;line-height:42px;color:#000;font-size:9.8px;font-weight:bold;letter-spacing:-0.1px;">01-jul</div>
<div style="left:452px;top:508px;width:42px;height:217px;background:#fff;"></div>
<div style="left:495px;top:442px;width:42px;height:44px;background:#d6dce4;"></div>
<div class="vt" style="left:495px;top:442px;width:42px;height:42px;line-height:42px;color:#000;font-size:9.8px;font-weight:bold;letter-spacing:-0.1px;">01-jul</div>
<div style="left:495px;top:508px;width:42px;height:217px;background:#d6dce4;"></div>
<div style="left:538px;top:442px;width:42px;height:44px;background:#fff;"></div>
<div class="vt" style="left:538px;top:442px;width:42px;height:42px;line-height:42px;color:#000;font-size:9.8px;font-weight:bold;letter-spacing:-0.1px;">01-jul</div>
<div style="left:538px;top:508px;width:42px;height:217px;background:#fff;"></div>
<div style="left:581px;top:442px;width:42px;height:44px;background:#e7e6e6;"></div>
<div class="vt" style="left:581px;top:442px;width:42px;height:42px;line-height:42px;color:#000;font-size:9.6px;font-weight:bold;letter-spacing:-0.85px;">DESDE</div>
<div style="left:581px;top:508px;width:42px;height:217px;background:#e7e6e6;"></div>
<div style="left:624px;top:442px;width:42px;height:44px;background:#e7e6e6;"></div>
<div class="vt" style="left:624px;top:442px;width:42px;height:42px;line-height:42px;color:#000;font-size:9.6px;font-weight:bold;letter-spacing:-0.85px;">HASTA</div>
<div style="left:624px;top:508px;width:42px;height:217px;background:#e7e6e6;"></div>
<div style="left:667px;top:442px;width:42px;height:44px;background:#d6dce4;"></div>
<div class="vt" style="left:667px;top:442px;width:42px;height:42px;line-height:42px;color:#000;font-size:9.8px;font-weight:bold;letter-spacing:-0.1px;">01-jul</div>
<div style="left:667px;top:508px;width:42px;height:217px;background:#d6dce4;"></div>
<div style="left:710px;top:442px;width:42px;height:44px;background:#fff;"></div>
<div class="vt" style="left:710px;top:442px;width:42px;height:42px;line-height:42px;color:#000;font-size:9.8px;font-weight:bold;letter-spacing:-0.1px;">01-jul</div>
<div style="left:710px;top:508px;width:42px;height:217px;background:#fff;"></div>
<div style="left:753px;top:442px;width:42px;height:44px;background:#d6dce4;"></div>
<div class="vt" style="left:753px;top:442px;width:42px;height:42px;line-height:42px;color:#000;font-size:9.8px;font-weight:bold;letter-spacing:-0.1px;">01-jul</div>
<div style="left:753px;top:508px;width:42px;height:217px;background:#d6dce4;"></div>
<div style="left:204px;top:442px;width:63px;height:44px;font-size:10px;font-weight:bold;line-height:44px;text-align:center;letter-spacing:-0.3px;">TURNO</div>
<div style="left:23px;top:487px;width:24px;height:20px;color:#e6e4e4;font-size:10px;line-height:22px;text-align:center;">1</div>
<div style="left:48px;top:487px;width:59px;height:20px;color:#e6e4e4;font-size:10px;line-height:22px;text-align:center;">2</div>
<div style="left:108px;top:487px;width:95px;height:20px;color:#e6e4e4;font-size:10px;line-height:22px;text-align:center;">3</div>
<div style="left:204px;top:487px;width:31px;height:20px;color:#e6e4e4;font-size:10px;line-height:22px;text-align:center;">4</div>
<div style="left:236px;top:487px;width:31px;height:20px;color:#e6e4e4;font-size:10px;line-height:22px;text-align:center;">5</div>
<div style="left:268px;top:487px;width:59px;height:20px;color:#e6e4e4;font-size:10px;line-height:22px;text-align:center;">6</div>
<div style="left:328px;top:487px;width:37px;height:20px;color:#e6e4e4;font-size:10px;line-height:22px;text-align:center;">7</div>
<div style="left:366px;top:487px;width:42px;height:20px;color:#e6e4e4;font-size:10px;line-height:22px;text-align:center;">8</div>
<div style="left:409px;top:487px;width:42px;height:20px;color:#e6e4e4;font-size:10px;line-height:22px;text-align:center;">9</div>
<div style="left:452px;top:487px;width:42px;height:20px;color:#e6e4e4;font-size:10px;line-height:22px;text-align:center;">10</div>
<div style="left:495px;top:487px;width:42px;height:20px;color:#e6e4e4;font-size:10px;line-height:22px;text-align:center;">41</div>
<div style="left:538px;top:487px;width:42px;height:20px;color:#e6e4e4;font-size:10px;line-height:22px;text-align:center;">72</div>
<div style="left:581px;top:487px;width:42px;height:20px;color:#e6e4e4;font-size:10px;line-height:22px;text-align:center;">103</div>
<div style="left:624px;top:487px;width:42px;height:20px;color:#e6e4e4;font-size:10px;line-height:22px;text-align:center;">104</div>
<div style="left:667px;top:487px;width:42px;height:20px;color:#e6e4e4;font-size:10px;line-height:22px;text-align:center;">105</div>
<div style="left:710px;top:487px;width:42px;height:20px;color:#e6e4e4;font-size:10px;line-height:22px;text-align:center;">136</div>
<div style="left:753px;top:487px;width:42px;height:20px;color:#e6e4e4;font-size:10px;line-height:22px;text-align:center;">167</div>
<div style="left:805px;top:487px;width:42px;height:20px;color:#e6e4e4;font-size:10px;line-height:22px;text-align:center;">199</div>
<div style="left:848px;top:487px;width:42px;height:20px;color:#e6e4e4;font-size:10px;line-height:22px;text-align:center;">200</div>
<div style="left:891px;top:487px;width:42px;height:20px;color:#e6e4e4;font-size:10px;line-height:22px;text-align:center;">201</div>
<div style="left:934px;top:487px;width:42px;height:20px;color:#e6e4e4;font-size:10px;line-height:22px;text-align:center;">202</div>
<div style="left:977px;top:487px;width:42px;height:20px;color:#e6e4e4;font-size:10px;line-height:22px;text-align:center;">203</div>
<div style="left:1020px;top:487px;width:42px;height:20px;color:#e6e4e4;font-size:10px;line-height:22px;text-align:center;">204</div>
<div style="left:1063px;top:487px;width:42px;height:20px;color:#e6e4e4;font-size:10px;line-height:22px;text-align:center;">205</div>
<div style="left:1106px;top:487px;width:42px;height:20px;color:#e6e4e4;font-size:10px;line-height:22px;text-align:center;">206</div>
<div style="left:1149px;top:487px;width:42px;height:20px;color:#e6e4e4;font-size:10px;line-height:22px;text-align:center;">207</div>
<div style="left:1192px;top:487px;width:42px;height:20px;color:#e6e4e4;font-size:10px;line-height:22px;text-align:center;">208</div>
<div style="left:1235px;top:487px;width:42px;height:20px;color:#e6e4e4;font-size:10px;line-height:22px;text-align:center;">209</div>
<div style="left:1278px;top:487px;width:42px;height:20px;color:#e6e4e4;font-size:10px;line-height:22px;text-align:center;">210</div>
<div style="left:1321px;top:487px;width:42px;height:20px;color:#e6e4e4;font-size:10px;line-height:22px;text-align:center;">211</div>
<div style="left:1364px;top:487px;width:42px;height:20px;color:#e6e4e4;font-size:10px;line-height:22px;text-align:center;">212</div>
<div style="left:1407px;top:487px;width:42px;height:20px;color:#e6e4e4;font-size:10px;line-height:22px;text-align:center;">213</div>
<div style="left:1450px;top:487px;width:42px;height:20px;color:#e6e4e4;font-size:10px;line-height:22px;text-align:center;">214</div>
<div style="left:1493px;top:487px;width:42px;height:20px;color:#e6e4e4;font-size:10px;line-height:22px;text-align:center;">215</div>
<div style="left:1536px;top:487px;width:42px;height:20px;color:#e6e4e4;font-size:10px;line-height:22px;text-align:center;">216</div>
<div style="left:805px;top:508px;width:773px;height:7px;background:#00ffff;"></div>
<div style="left:1019px;top:508px;width:87px;height:7px;background:repeating-linear-gradient(135deg,#ff00ff 0 1.6px,#ff7bff 1.6px 2.83px);"></div>
<div style="left:1320px;top:508px;width:87px;height:7px;background:repeating-linear-gradient(135deg,#ff00ff 0 1.6px,#ff7bff 1.6px 2.83px);"></div>
<div style="left:1535px;top:508px;width:43px;height:7px;background:repeating-linear-gradient(135deg,#ff00ff 0 1.6px,#ff7bff 1.6px 2.83px);"></div>
<div style="left:805px;top:516px;width:731px;height:20px;background:#ccffff;"></div>
<div style="left:805px;top:516px;width:42px;height:20px;font-size:10.5px;line-height:22px;text-align:center;color:#111;">8:00</div>
<div style="left:848px;top:516px;width:42px;height:20px;font-size:10.5px;line-height:22px;text-align:center;color:#111;">8:00</div>
<div style="left:891px;top:516px;width:42px;height:20px;font-size:10.5px;line-height:22px;text-align:center;color:#111;">8:00</div>
<div style="left:934px;top:516px;width:42px;height:20px;font-size:10.5px;line-height:22px;text-align:center;color:#111;">8:00</div>
<div style="left:977px;top:516px;width:42px;height:20px;font-size:10.5px;line-height:22px;text-align:center;color:#111;">8:00</div>
<div style="left:1020px;top:516px;width:43px;height:20px;background:repeating-linear-gradient(135deg,#16d916 0 1.7px,#5fe85f 1.7px 2.83px);"></div>
<div style="left:1020px;top:516px;width:42px;height:20px;color:#0a3d0a;font-size:10.5px;line-height:22px;text-align:center;">D</div>
<div style="left:1020px;top:537px;width:43px;height:188px;background:repeating-linear-gradient(135deg,#bcbcbc 0 0.85px,#fff 0.85px 2.83px);"></div>
<div style="left:1063px;top:516px;width:43px;height:20px;background:repeating-linear-gradient(135deg,#16d916 0 1.7px,#5fe85f 1.7px 2.83px);"></div>
<div style="left:1063px;top:516px;width:42px;height:20px;color:#0a3d0a;font-size:10.5px;line-height:22px;text-align:center;">D</div>
<div style="left:1063px;top:537px;width:43px;height:188px;background:repeating-linear-gradient(135deg,#bcbcbc 0 0.85px,#fff 0.85px 2.83px);"></div>
<div style="left:1106px;top:516px;width:42px;height:20px;font-size:10.5px;line-height:22px;text-align:center;color:#111;">8:00</div>
<div style="left:1149px;top:516px;width:42px;height:20px;font-size:10.5px;line-height:22px;text-align:center;color:#111;">8:00</div>
<div style="left:1192px;top:516px;width:42px;height:20px;font-size:10.5px;line-height:22px;text-align:center;color:#111;">8:00</div>
<div style="left:1235px;top:516px;width:42px;height:20px;font-size:10.5px;line-height:22px;text-align:center;color:#111;">8:00</div>
<div style="left:1278px;top:516px;width:42px;height:20px;font-size:10.5px;line-height:22px;text-align:center;color:#111;">8:00</div>
<div style="left:1321px;top:516px;width:43px;height:20px;background:repeating-linear-gradient(135deg,#16d916 0 1.7px,#5fe85f 1.7px 2.83px);"></div>
<div style="left:1321px;top:516px;width:42px;height:20px;color:#0a3d0a;font-size:10.5px;line-height:22px;text-align:center;">D</div>
<div style="left:1321px;top:537px;width:43px;height:188px;background:repeating-linear-gradient(135deg,#bcbcbc 0 0.85px,#fff 0.85px 2.83px);"></div>
<div style="left:1364px;top:516px;width:43px;height:20px;background:repeating-linear-gradient(135deg,#16d916 0 1.7px,#5fe85f 1.7px 2.83px);"></div>
<div style="left:1364px;top:516px;width:42px;height:20px;color:#0a3d0a;font-size:10.5px;line-height:22px;text-align:center;">D</div>
<div style="left:1364px;top:537px;width:43px;height:188px;background:repeating-linear-gradient(135deg,#bcbcbc 0 0.85px,#fff 0.85px 2.83px);"></div>
<div style="left:1407px;top:516px;width:42px;height:20px;font-size:10.5px;line-height:22px;text-align:center;color:#111;">8:00</div>
<div style="left:1450px;top:516px;width:42px;height:20px;font-size:10.5px;line-height:22px;text-align:center;color:#111;">8:00</div>
<div style="left:1493px;top:516px;width:42px;height:20px;font-size:10.5px;line-height:22px;text-align:center;color:#111;">8:00</div>
<div style="left:805px;top:536px;width:731px;height:1px;background:#d8d8d8;"></div>
<div style="left:805px;top:557px;width:731px;height:1px;background:#d8d8d8;"></div>
<div style="left:805px;top:578px;width:731px;height:1px;background:#d8d8d8;"></div>
<div style="left:805px;top:599px;width:731px;height:1px;background:#d8d8d8;"></div>
<div style="left:805px;top:620px;width:731px;height:1px;background:#d8d8d8;"></div>
<div style="left:805px;top:641px;width:731px;height:1px;background:#d8d8d8;"></div>
<div style="left:805px;top:662px;width:731px;height:1px;background:#d8d8d8;"></div>
<div style="left:805px;top:683px;width:731px;height:1px;background:#d8d8d8;"></div>
<div style="left:805px;top:704px;width:731px;height:1px;background:#d8d8d8;"></div>
<div style="left:805px;top:725px;width:731px;height:1px;background:#d8d8d8;"></div>
<div style="left:847px;top:516px;width:1px;height:20px;background:rgba(150,190,190,.45);"></div>
<div style="left:847px;top:537px;width:1px;height:188px;background:#d8d8d8;"></div>
<div style="left:890px;top:516px;width:1px;height:20px;background:rgba(150,190,190,.45);"></div>
<div style="left:890px;top:537px;width:1px;height:188px;background:#d8d8d8;"></div>
<div style="left:933px;top:516px;width:1px;height:20px;background:rgba(150,190,190,.45);"></div>
<div style="left:933px;top:537px;width:1px;height:188px;background:#d8d8d8;"></div>
<div style="left:976px;top:516px;width:1px;height:20px;background:rgba(150,190,190,.45);"></div>
<div style="left:976px;top:537px;width:1px;height:188px;background:#d8d8d8;"></div>
<div style="left:1019px;top:516px;width:1px;height:20px;background:rgba(150,190,190,.45);"></div>
<div style="left:1019px;top:537px;width:1px;height:188px;background:#d8d8d8;"></div>
<div style="left:1062px;top:516px;width:1px;height:20px;background:rgba(150,190,190,.45);"></div>
<div style="left:1062px;top:537px;width:1px;height:188px;background:#d8d8d8;"></div>
<div style="left:1105px;top:516px;width:1px;height:20px;background:rgba(150,190,190,.45);"></div>
<div style="left:1148px;top:516px;width:1px;height:20px;background:rgba(150,190,190,.45);"></div>
<div style="left:1148px;top:537px;width:1px;height:188px;background:#d8d8d8;"></div>
<div style="left:1191px;top:516px;width:1px;height:20px;background:rgba(150,190,190,.45);"></div>
<div style="left:1191px;top:537px;width:1px;height:188px;background:#d8d8d8;"></div>
<div style="left:1234px;top:516px;width:1px;height:20px;background:rgba(150,190,190,.45);"></div>
<div style="left:1234px;top:537px;width:1px;height:188px;background:#d8d8d8;"></div>
<div style="left:1277px;top:516px;width:1px;height:20px;background:rgba(150,190,190,.45);"></div>
<div style="left:1277px;top:537px;width:1px;height:188px;background:#d8d8d8;"></div>
<div style="left:1320px;top:516px;width:1px;height:20px;background:rgba(150,190,190,.45);"></div>
<div style="left:1320px;top:537px;width:1px;height:188px;background:#d8d8d8;"></div>
<div style="left:1363px;top:516px;width:1px;height:20px;background:rgba(150,190,190,.45);"></div>
<div style="left:1363px;top:537px;width:1px;height:188px;background:#d8d8d8;"></div>
<div style="left:1406px;top:516px;width:1px;height:20px;background:rgba(150,190,190,.45);"></div>
<div style="left:1449px;top:516px;width:1px;height:20px;background:rgba(150,190,190,.45);"></div>
<div style="left:1449px;top:537px;width:1px;height:188px;background:#d8d8d8;"></div>
<div style="left:1492px;top:516px;width:1px;height:20px;background:rgba(150,190,190,.45);"></div>
<div style="left:1492px;top:537px;width:1px;height:188px;background:#d8d8d8;"></div>
<div style="left:1535px;top:516px;width:1px;height:20px;background:rgba(150,190,190,.45);"></div>
<div style="left:1535px;top:537px;width:1px;height:188px;background:#d8d8d8;"></div>
<div style="left:804px;top:516px;width:1px;height:210px;background:#d8d8d8;"></div>
<div style="left:1105px;top:537px;width:1px;height:189px;background:#5e5e5e;"></div>
<div style="left:1406px;top:537px;width:1px;height:189px;background:#5e5e5e;"></div>
<div style="left:1536px;top:516px;width:43px;height:209px;background:#06c0f6;"></div>
<div style="left:1536px;top:516px;width:42px;height:20px;color:#fff;font-size:10.4px;font-weight:bold;line-height:22px;text-align:center;letter-spacing:-0.6px;">FL</div>
<div style="left:1536px;top:536px;width:43px;height:1px;background:#6fe0fb;"></div>
<div style="left:1536px;top:537px;width:42px;height:20px;color:#fff;font-size:10.4px;font-weight:bold;line-height:22px;text-align:center;letter-spacing:-0.6px;">FL</div>
<div style="left:1536px;top:557px;width:43px;height:1px;background:#6fe0fb;"></div>
<div style="left:1536px;top:558px;width:42px;height:20px;color:#fff;font-size:10.4px;font-weight:bold;line-height:22px;text-align:center;letter-spacing:-0.6px;">FL</div>
<div style="left:1536px;top:578px;width:43px;height:1px;background:#6fe0fb;"></div>
<div style="left:1536px;top:579px;width:42px;height:20px;color:#fff;font-size:10.4px;font-weight:bold;line-height:22px;text-align:center;letter-spacing:-0.6px;">FL</div>
<div style="left:1536px;top:599px;width:43px;height:1px;background:#6fe0fb;"></div>
<div style="left:1536px;top:600px;width:42px;height:20px;color:#fff;font-size:10.4px;font-weight:bold;line-height:22px;text-align:center;letter-spacing:-0.6px;">FL</div>
<div style="left:1536px;top:620px;width:43px;height:1px;background:#6fe0fb;"></div>
<div style="left:1536px;top:621px;width:42px;height:20px;color:#fff;font-size:10.4px;font-weight:bold;line-height:22px;text-align:center;letter-spacing:-0.6px;">FL</div>
<div style="left:1536px;top:641px;width:43px;height:1px;background:#6fe0fb;"></div>
<div style="left:1536px;top:642px;width:42px;height:20px;color:#fff;font-size:10.4px;font-weight:bold;line-height:22px;text-align:center;letter-spacing:-0.6px;">FL</div>
<div style="left:1536px;top:662px;width:43px;height:1px;background:#6fe0fb;"></div>
<div style="left:1536px;top:663px;width:42px;height:20px;color:#fff;font-size:10.4px;font-weight:bold;line-height:22px;text-align:center;letter-spacing:-0.6px;">FL</div>
<div style="left:1536px;top:683px;width:43px;height:1px;background:#6fe0fb;"></div>
<div style="left:1536px;top:684px;width:42px;height:20px;color:#fff;font-size:10.4px;font-weight:bold;line-height:22px;text-align:center;letter-spacing:-0.6px;">FL</div>
<div style="left:1536px;top:704px;width:43px;height:1px;background:#6fe0fb;"></div>
<div style="left:1536px;top:705px;width:42px;height:20px;color:#fff;font-size:10.4px;font-weight:bold;line-height:22px;text-align:center;letter-spacing:-0.6px;">FL</div>
<div style="left:1536px;top:725px;width:43px;height:1px;background:#6fe0fb;"></div>
<div style="left:23px;top:486px;width:342px;height:1px;background:#d8d8d8;"></div>
<div style="left:23px;top:507px;width:342px;height:1px;background:#d8d8d8;"></div>
<div style="left:23px;top:536px;width:342px;height:1px;background:#d8d8d8;"></div>
<div style="left:23px;top:557px;width:342px;height:1px;background:#d8d8d8;"></div>
<div style="left:23px;top:578px;width:342px;height:1px;background:#d8d8d8;"></div>
<div style="left:23px;top:599px;width:342px;height:1px;background:#d8d8d8;"></div>
<div style="left:23px;top:620px;width:342px;height:1px;background:#d8d8d8;"></div>
<div style="left:23px;top:641px;width:342px;height:1px;background:#d8d8d8;"></div>
<div style="left:23px;top:662px;width:342px;height:1px;background:#d8d8d8;"></div>
<div style="left:23px;top:683px;width:342px;height:1px;background:#d8d8d8;"></div>
<div style="left:23px;top:704px;width:342px;height:1px;background:#d8d8d8;"></div>
<div style="left:23px;top:725px;width:342px;height:1px;background:#d8d8d8;"></div>
<div style="left:47px;top:442px;width:1px;height:284px;background:#d8d8d8;"></div>
<div style="left:107px;top:442px;width:1px;height:284px;background:#d8d8d8;"></div>
<div style="left:203px;top:442px;width:1px;height:284px;background:#d8d8d8;"></div>
<div style="left:235px;top:487px;width:1px;height:239px;background:#d8d8d8;"></div>
<div style="left:267px;top:442px;width:1px;height:284px;background:#d8d8d8;"></div>
<div style="left:327px;top:442px;width:1px;height:284px;background:#d8d8d8;"></div>
<div style="left:23px;top:516px;width:24px;height:20px;font-size:10px;font-weight:bold;line-height:22px;text-align:center;">1</div>
<div style="left:23px;top:537px;width:24px;height:20px;font-size:10px;font-weight:bold;line-height:22px;text-align:center;">2</div>
<div style="left:23px;top:558px;width:24px;height:20px;font-size:10px;font-weight:bold;line-height:22px;text-align:center;">3</div>
<div style="left:23px;top:579px;width:24px;height:20px;font-size:10px;font-weight:bold;line-height:22px;text-align:center;">4</div>
<div style="left:23px;top:600px;width:24px;height:20px;font-size:10px;font-weight:bold;line-height:22px;text-align:center;">5</div>
<div style="left:23px;top:621px;width:24px;height:20px;font-size:10px;font-weight:bold;line-height:22px;text-align:center;">6</div>
<div style="left:23px;top:642px;width:24px;height:20px;font-size:10px;font-weight:bold;line-height:22px;text-align:center;">7</div>
<div style="left:23px;top:663px;width:24px;height:20px;font-size:10px;font-weight:bold;line-height:22px;text-align:center;">8</div>
<div style="left:23px;top:684px;width:24px;height:20px;font-size:10px;font-weight:bold;line-height:22px;text-align:center;">9</div>
<div style="left:23px;top:705px;width:24px;height:20px;font-size:10px;font-weight:bold;line-height:22px;text-align:center;">10</div>
<div style="left:48px;top:516px;width:59px;height:20px;font-size:10.3px;line-height:15px;overflow:hidden;letter-spacing:0.12px;"><div style="top:-3px;left:3px;">13492022-<br>k</div></div>
<div style="left:108px;top:516px;width:95px;height:20px;font-size:9.6px;line-height:22px;padding-left:2px;box-sizing:border-box;letter-spacing:-0.55px;white-space:nowrap;">MAURICIO JEREZ</div>
<div style="left:204px;top:516px;width:31px;height:20px;font-size:10.5px;line-height:22px;text-align:center;">5</div>
<div style="left:236px;top:516px;width:31px;height:20px;font-size:10.5px;line-height:22px;text-align:center;">2</div>
<div style="left:268px;top:516px;width:59px;height:20px;font-size:10.3px;line-height:22px;text-align:center;letter-spacing:-0.1px;">01-07-2025</div>
<div style="left:328px;top:516px;width:37px;height:20px;font-size:10px;line-height:22px;text-align:center;">LV</div>
<div style="left:366px;top:486px;width:42px;height:1px;background:rgba(255,255,255,.5);"></div>
<div style="left:409px;top:486px;width:42px;height:1px;background:rgba(255,255,255,.5);"></div>
<div style="left:452px;top:486px;width:42px;height:1px;background:#d8d8d8;"></div>
<div style="left:495px;top:486px;width:42px;height:1px;background:rgba(255,255,255,.5);"></div>
<div style="left:538px;top:486px;width:42px;height:1px;background:#d8d8d8;"></div>
<div style="left:581px;top:486px;width:42px;height:1px;background:rgba(255,255,255,.5);"></div>
<div style="left:624px;top:486px;width:42px;height:1px;background:rgba(255,255,255,.5);"></div>
<div style="left:667px;top:486px;width:42px;height:1px;background:rgba(255,255,255,.5);"></div>
<div style="left:710px;top:486px;width:42px;height:1px;background:#d8d8d8;"></div>
<div style="left:753px;top:486px;width:42px;height:1px;background:rgba(255,255,255,.5);"></div>
<div style="left:366px;top:507px;width:42px;height:1px;background:rgba(255,255,255,.5);"></div>
<div style="left:409px;top:507px;width:42px;height:1px;background:rgba(255,255,255,.5);"></div>
<div style="left:452px;top:507px;width:42px;height:1px;background:#d8d8d8;"></div>
<div style="left:495px;top:507px;width:42px;height:1px;background:rgba(255,255,255,.5);"></div>
<div style="left:538px;top:507px;width:42px;height:1px;background:#d8d8d8;"></div>
<div style="left:581px;top:507px;width:42px;height:1px;background:rgba(255,255,255,.5);"></div>
<div style="left:624px;top:507px;width:42px;height:1px;background:rgba(255,255,255,.5);"></div>
<div style="left:667px;top:507px;width:42px;height:1px;background:rgba(255,255,255,.5);"></div>
<div style="left:710px;top:507px;width:42px;height:1px;background:#d8d8d8;"></div>
<div style="left:753px;top:507px;width:42px;height:1px;background:rgba(255,255,255,.5);"></div>
<div style="left:366px;top:536px;width:42px;height:1px;background:rgba(255,255,255,.5);"></div>
<div style="left:409px;top:536px;width:42px;height:1px;background:rgba(255,255,255,.5);"></div>
<div style="left:452px;top:536px;width:42px;height:1px;background:#d8d8d8;"></div>
<div style="left:495px;top:536px;width:42px;height:1px;background:rgba(255,255,255,.5);"></div>
<div style="left:538px;top:536px;width:42px;height:1px;background:#d8d8d8;"></div>
<div style="left:581px;top:536px;width:42px;height:1px;background:rgba(255,255,255,.5);"></div>
<div style="left:624px;top:536px;width:42px;height:1px;background:rgba(255,255,255,.5);"></div>
<div style="left:667px;top:536px;width:42px;height:1px;background:rgba(255,255,255,.5);"></div>
<div style="left:710px;top:536px;width:42px;height:1px;background:#d8d8d8;"></div>
<div style="left:753px;top:536px;width:42px;height:1px;background:rgba(255,255,255,.5);"></div>
<div style="left:366px;top:557px;width:42px;height:1px;background:rgba(255,255,255,.5);"></div>
<div style="left:409px;top:557px;width:42px;height:1px;background:rgba(255,255,255,.5);"></div>
<div style="left:452px;top:557px;width:42px;height:1px;background:#d8d8d8;"></div>
<div style="left:495px;top:557px;width:42px;height:1px;background:rgba(255,255,255,.5);"></div>
<div style="left:538px;top:557px;width:42px;height:1px;background:#d8d8d8;"></div>
<div style="left:581px;top:557px;width:42px;height:1px;background:rgba(255,255,255,.5);"></div>
<div style="left:624px;top:557px;width:42px;height:1px;background:rgba(255,255,255,.5);"></div>
<div style="left:667px;top:557px;width:42px;height:1px;background:rgba(255,255,255,.5);"></div>
<div style="left:710px;top:557px;width:42px;height:1px;background:#d8d8d8;"></div>
<div style="left:753px;top:557px;width:42px;height:1px;background:rgba(255,255,255,.5);"></div>
<div style="left:366px;top:578px;width:42px;height:1px;background:rgba(255,255,255,.5);"></div>
<div style="left:409px;top:578px;width:42px;height:1px;background:rgba(255,255,255,.5);"></div>
<div style="left:452px;top:578px;width:42px;height:1px;background:#d8d8d8;"></div>
<div style="left:495px;top:578px;width:42px;height:1px;background:rgba(255,255,255,.5);"></div>
<div style="left:538px;top:578px;width:42px;height:1px;background:#d8d8d8;"></div>
<div style="left:581px;top:578px;width:42px;height:1px;background:rgba(255,255,255,.5);"></div>
<div style="left:624px;top:578px;width:42px;height:1px;background:rgba(255,255,255,.5);"></div>
<div style="left:667px;top:578px;width:42px;height:1px;background:rgba(255,255,255,.5);"></div>
<div style="left:710px;top:578px;width:42px;height:1px;background:#d8d8d8;"></div>
<div style="left:753px;top:578px;width:42px;height:1px;background:rgba(255,255,255,.5);"></div>
<div style="left:366px;top:599px;width:42px;height:1px;background:rgba(255,255,255,.5);"></div>
<div style="left:409px;top:599px;width:42px;height:1px;background:rgba(255,255,255,.5);"></div>
<div style="left:452px;top:599px;width:42px;height:1px;background:#d8d8d8;"></div>
<div style="left:495px;top:599px;width:42px;height:1px;background:rgba(255,255,255,.5);"></div>
<div style="left:538px;top:599px;width:42px;height:1px;background:#d8d8d8;"></div>
<div style="left:581px;top:599px;width:42px;height:1px;background:rgba(255,255,255,.5);"></div>
<div style="left:624px;top:599px;width:42px;height:1px;background:rgba(255,255,255,.5);"></div>
<div style="left:667px;top:599px;width:42px;height:1px;background:rgba(255,255,255,.5);"></div>
<div style="left:710px;top:599px;width:42px;height:1px;background:#d8d8d8;"></div>
<div style="left:753px;top:599px;width:42px;height:1px;background:rgba(255,255,255,.5);"></div>
<div style="left:366px;top:620px;width:42px;height:1px;background:rgba(255,255,255,.5);"></div>
<div style="left:409px;top:620px;width:42px;height:1px;background:rgba(255,255,255,.5);"></div>
<div style="left:452px;top:620px;width:42px;height:1px;background:#d8d8d8;"></div>
<div style="left:495px;top:620px;width:42px;height:1px;background:rgba(255,255,255,.5);"></div>
<div style="left:538px;top:620px;width:42px;height:1px;background:#d8d8d8;"></div>
<div style="left:581px;top:620px;width:42px;height:1px;background:rgba(255,255,255,.5);"></div>
<div style="left:624px;top:620px;width:42px;height:1px;background:rgba(255,255,255,.5);"></div>
<div style="left:667px;top:620px;width:42px;height:1px;background:rgba(255,255,255,.5);"></div>
<div style="left:710px;top:620px;width:42px;height:1px;background:#d8d8d8;"></div>
<div style="left:753px;top:620px;width:42px;height:1px;background:rgba(255,255,255,.5);"></div>
<div style="left:366px;top:641px;width:42px;height:1px;background:rgba(255,255,255,.5);"></div>
<div style="left:409px;top:641px;width:42px;height:1px;background:rgba(255,255,255,.5);"></div>
<div style="left:452px;top:641px;width:42px;height:1px;background:#d8d8d8;"></div>
<div style="left:495px;top:641px;width:42px;height:1px;background:rgba(255,255,255,.5);"></div>
<div style="left:538px;top:641px;width:42px;height:1px;background:#d8d8d8;"></div>
<div style="left:581px;top:641px;width:42px;height:1px;background:rgba(255,255,255,.5);"></div>
<div style="left:624px;top:641px;width:42px;height:1px;background:rgba(255,255,255,.5);"></div>
<div style="left:667px;top:641px;width:42px;height:1px;background:rgba(255,255,255,.5);"></div>
<div style="left:710px;top:641px;width:42px;height:1px;background:#d8d8d8;"></div>
<div style="left:753px;top:641px;width:42px;height:1px;background:rgba(255,255,255,.5);"></div>
<div style="left:366px;top:662px;width:42px;height:1px;background:rgba(255,255,255,.5);"></div>
<div style="left:409px;top:662px;width:42px;height:1px;background:rgba(255,255,255,.5);"></div>
<div style="left:452px;top:662px;width:42px;height:1px;background:#d8d8d8;"></div>
<div style="left:495px;top:662px;width:42px;height:1px;background:rgba(255,255,255,.5);"></div>
<div style="left:538px;top:662px;width:42px;height:1px;background:#d8d8d8;"></div>
<div style="left:581px;top:662px;width:42px;height:1px;background:rgba(255,255,255,.5);"></div>
<div style="left:624px;top:662px;width:42px;height:1px;background:rgba(255,255,255,.5);"></div>
<div style="left:667px;top:662px;width:42px;height:1px;background:rgba(255,255,255,.5);"></div>
<div style="left:710px;top:662px;width:42px;height:1px;background:#d8d8d8;"></div>
<div style="left:753px;top:662px;width:42px;height:1px;background:rgba(255,255,255,.5);"></div>
<div style="left:366px;top:683px;width:42px;height:1px;background:rgba(255,255,255,.5);"></div>
<div style="left:409px;top:683px;width:42px;height:1px;background:rgba(255,255,255,.5);"></div>
<div style="left:452px;top:683px;width:42px;height:1px;background:#d8d8d8;"></div>
<div style="left:495px;top:683px;width:42px;height:1px;background:rgba(255,255,255,.5);"></div>
<div style="left:538px;top:683px;width:42px;height:1px;background:#d8d8d8;"></div>
<div style="left:581px;top:683px;width:42px;height:1px;background:rgba(255,255,255,.5);"></div>
<div style="left:624px;top:683px;width:42px;height:1px;background:rgba(255,255,255,.5);"></div>
<div style="left:667px;top:683px;width:42px;height:1px;background:rgba(255,255,255,.5);"></div>
<div style="left:710px;top:683px;width:42px;height:1px;background:#d8d8d8;"></div>
<div style="left:753px;top:683px;width:42px;height:1px;background:rgba(255,255,255,.5);"></div>
<div style="left:366px;top:704px;width:42px;height:1px;background:rgba(255,255,255,.5);"></div>
<div style="left:409px;top:704px;width:42px;height:1px;background:rgba(255,255,255,.5);"></div>
<div style="left:452px;top:704px;width:42px;height:1px;background:#d8d8d8;"></div>
<div style="left:495px;top:704px;width:42px;height:1px;background:rgba(255,255,255,.5);"></div>
<div style="left:538px;top:704px;width:42px;height:1px;background:#d8d8d8;"></div>
<div style="left:581px;top:704px;width:42px;height:1px;background:rgba(255,255,255,.5);"></div>
<div style="left:624px;top:704px;width:42px;height:1px;background:rgba(255,255,255,.5);"></div>
<div style="left:667px;top:704px;width:42px;height:1px;background:rgba(255,255,255,.5);"></div>
<div style="left:710px;top:704px;width:42px;height:1px;background:#d8d8d8;"></div>
<div style="left:753px;top:704px;width:42px;height:1px;background:rgba(255,255,255,.5);"></div>
<div style="left:366px;top:725px;width:42px;height:1px;background:rgba(255,255,255,.5);"></div>
<div style="left:409px;top:725px;width:42px;height:1px;background:rgba(255,255,255,.5);"></div>
<div style="left:452px;top:725px;width:42px;height:1px;background:#d8d8d8;"></div>
<div style="left:495px;top:725px;width:42px;height:1px;background:rgba(255,255,255,.5);"></div>
<div style="left:538px;top:725px;width:42px;height:1px;background:#d8d8d8;"></div>
<div style="left:581px;top:725px;width:42px;height:1px;background:rgba(255,255,255,.5);"></div>
<div style="left:624px;top:725px;width:42px;height:1px;background:rgba(255,255,255,.5);"></div>
<div style="left:667px;top:725px;width:42px;height:1px;background:rgba(255,255,255,.5);"></div>
<div style="left:710px;top:725px;width:42px;height:1px;background:#d8d8d8;"></div>
<div style="left:753px;top:725px;width:42px;height:1px;background:rgba(255,255,255,.5);"></div>
<div style="left:408px;top:442px;width:1px;height:284px;background:rgba(150,150,150,.4);"></div>
<div style="left:451px;top:442px;width:1px;height:284px;background:rgba(150,150,150,.4);"></div>
<div style="left:494px;top:442px;width:1px;height:284px;background:rgba(150,150,150,.4);"></div>
<div style="left:537px;top:442px;width:1px;height:284px;background:rgba(150,150,150,.4);"></div>
<div style="left:580px;top:442px;width:1px;height:284px;background:rgba(150,150,150,.4);"></div>
<div style="left:623px;top:442px;width:1px;height:284px;background:rgba(150,150,150,.4);"></div>
<div style="left:666px;top:442px;width:1px;height:284px;background:rgba(150,150,150,.4);"></div>
<div style="left:709px;top:442px;width:1px;height:284px;background:rgba(150,150,150,.4);"></div>
<div style="left:752px;top:442px;width:1px;height:284px;background:rgba(150,150,150,.4);"></div>
<div style="left:795px;top:442px;width:1px;height:284px;background:rgba(150,150,150,.4);"></div>
<div style="left:796px;top:507px;width:9px;height:1px;background:#d8d8d8;"></div>
<div style="left:796px;top:536px;width:9px;height:1px;background:#d8d8d8;"></div>
<div style="left:796px;top:557px;width:9px;height:1px;background:#d8d8d8;"></div>
<div style="left:796px;top:578px;width:9px;height:1px;background:#d8d8d8;"></div>
<div style="left:796px;top:599px;width:9px;height:1px;background:#d8d8d8;"></div>
<div style="left:796px;top:620px;width:9px;height:1px;background:#d8d8d8;"></div>
<div style="left:796px;top:641px;width:9px;height:1px;background:#d8d8d8;"></div>
<div style="left:796px;top:662px;width:9px;height:1px;background:#d8d8d8;"></div>
<div style="left:796px;top:683px;width:9px;height:1px;background:#d8d8d8;"></div>
<div style="left:796px;top:704px;width:9px;height:1px;background:#d8d8d8;"></div>
<div style="left:796px;top:725px;width:9px;height:1px;background:#d8d8d8;"></div>
<div style="left:710px;top:516px;width:42px;height:20px;font-size:10.3px;line-height:22px;text-align:center;">4:00</div>
<div style="left:805px;top:768px;width:773px;height:20px;background:#ffff00;"></div>
<div style="left:805px;top:768px;width:42px;height:20px;font-size:10.8px;line-height:21px;text-align:center;color:#333300;">0:00</div>
<div style="left:847px;top:768px;width:1px;height:20px;background:#ffff6e;"></div>
<div style="left:848px;top:768px;width:42px;height:20px;font-size:10.8px;line-height:21px;text-align:center;color:#333300;">0:00</div>
<div style="left:890px;top:768px;width:1px;height:20px;background:#ffff6e;"></div>
<div style="left:891px;top:768px;width:42px;height:20px;font-size:10.8px;line-height:21px;text-align:center;color:#333300;">0:00</div>
<div style="left:933px;top:768px;width:1px;height:20px;background:#ffff6e;"></div>
<div style="left:934px;top:768px;width:42px;height:20px;font-size:10.8px;line-height:21px;text-align:center;color:#333300;">0:00</div>
<div style="left:976px;top:768px;width:1px;height:20px;background:#ffff6e;"></div>
<div style="left:977px;top:768px;width:42px;height:20px;font-size:10.8px;line-height:21px;text-align:center;color:#333300;">0:00</div>
<div style="left:1019px;top:768px;width:1px;height:20px;background:#ffff6e;"></div>
<div style="left:1020px;top:768px;width:42px;height:20px;font-size:10.8px;line-height:21px;text-align:center;color:#333300;">0:00</div>
<div style="left:1062px;top:768px;width:1px;height:20px;background:#ffff6e;"></div>
<div style="left:1063px;top:768px;width:42px;height:20px;font-size:10.8px;line-height:21px;text-align:center;color:#333300;">0:00</div>
<div style="left:1105px;top:768px;width:1px;height:20px;background:#ffff6e;"></div>
<div style="left:1106px;top:768px;width:42px;height:20px;font-size:10.8px;line-height:21px;text-align:center;color:#333300;">0:00</div>
<div style="left:1148px;top:768px;width:1px;height:20px;background:#ffff6e;"></div>
<div style="left:1149px;top:768px;width:42px;height:20px;font-size:10.8px;line-height:21px;text-align:center;color:#333300;">0:00</div>
<div style="left:1191px;top:768px;width:1px;height:20px;background:#ffff6e;"></div>
<div style="left:1192px;top:768px;width:42px;height:20px;font-size:10.8px;line-height:21px;text-align:center;color:#333300;">0:00</div>
<div style="left:1234px;top:768px;width:1px;height:20px;background:#ffff6e;"></div>
<div style="left:1235px;top:768px;width:42px;height:20px;font-size:10.8px;line-height:21px;text-align:center;color:#333300;">0:00</div>
<div style="left:1277px;top:768px;width:1px;height:20px;background:#ffff6e;"></div>
<div style="left:1278px;top:768px;width:42px;height:20px;font-size:10.8px;line-height:21px;text-align:center;color:#333300;">0:00</div>
<div style="left:1320px;top:768px;width:1px;height:20px;background:#ffff6e;"></div>
<div style="left:1321px;top:768px;width:42px;height:20px;font-size:10.8px;line-height:21px;text-align:center;color:#333300;">0:00</div>
<div style="left:1363px;top:768px;width:1px;height:20px;background:#ffff6e;"></div>
<div style="left:1364px;top:768px;width:42px;height:20px;font-size:10.8px;line-height:21px;text-align:center;color:#333300;">0:00</div>
<div style="left:1406px;top:768px;width:1px;height:20px;background:#ffff6e;"></div>
<div style="left:1407px;top:768px;width:42px;height:20px;font-size:10.8px;line-height:21px;text-align:center;color:#333300;">0:00</div>
<div style="left:1449px;top:768px;width:1px;height:20px;background:#ffff6e;"></div>
<div style="left:1450px;top:768px;width:42px;height:20px;font-size:10.8px;line-height:21px;text-align:center;color:#333300;">0:00</div>
<div style="left:1492px;top:768px;width:1px;height:20px;background:#ffff6e;"></div>
<div style="left:1493px;top:768px;width:42px;height:20px;font-size:10.8px;line-height:21px;text-align:center;color:#333300;">0:00</div>
<div style="left:1535px;top:768px;width:1px;height:20px;background:#ffff6e;"></div>
<div style="left:1536px;top:768px;width:42px;height:20px;font-size:10.8px;line-height:21px;text-align:center;color:#333300;">0:00</div>
<div style="left:365px;top:110px;width:1px;height:700px;background:#999;"></div>
<div style="left:0px;top:515px;width:1579px;height:1px;background:#8e8e8e;"></div>
<div style="left:1579px;top:110px;width:21px;height:700px;background:#e6e6e6;"></div>
<div style="left:1578px;top:158px;width:1px;height:358px;background:#a0a0a0;"></div>
<div style="left:1578px;top:726px;width:1px;height:84px;background:#a0a0a0;"></div>
<div style="left:1579px;top:158px;width:3px;height:652px;background:#e0dfe4;"></div>
<div style="left:1582px;top:113px;width:15px;height:15px;background:#fff;border:1px solid #b4b4b4;box-sizing:border-box;"><svg width="13" height="13" viewBox="0 0 13 13" style="position:absolute;left:0;top:0"><path d="M3 8.5L6.5 4.5L10 8.5Z" fill="#666"/></svg></div>
<div style="left:1582px;top:128px;width:15px;height:560px;background:#fff;border:1px solid #b4b4b4;box-sizing:border-box;"></div>
<div style="left:1582px;top:795px;width:15px;height:15px;background:#fff;border:1px solid #b4b4b4;box-sizing:border-box;"><svg width="13" height="13" viewBox="0 0 13 13" style="position:absolute;left:0;top:0"><path d="M3 4.5L6.5 8.5L10 4.5Z" fill="#666"/></svg></div>
<div style="left:0px;top:810px;width:1600px;height:28px;background:#e6e6e6;"></div>
<div style="left:0px;top:810px;width:1600px;height:1px;background:#9e9e9e;"></div>
<svg style="position:absolute;left:26px;top:819px" width="6" height="9" viewBox="0 0 6 9"><path d="M5 0.5V8.5L1 4.5Z" fill="#c6c6c6"/></svg>
<svg style="position:absolute;left:55px;top:819px" width="6" height="9" viewBox="0 0 6 9"><path d="M1 0.5V8.5L5 4.5Z" fill="#c6c6c6"/></svg>
<div style="left:100px;top:810px;width:67px;height:23px;background:#fff;border-left:1px solid #bdbdbd;border-right:1px solid #bdbdbd;box-sizing:border-box;color:#217346;font-weight:bold;font-size:13px;line-height:25px;text-align:center;letter-spacing:0.1px;">Turnos</div>
<div style="left:100px;top:833px;width:67px;height:2px;background:#217346;"></div>
<div style="left:200px;top:816px;width:16px;height:16px;border:1.5px solid #757575;border-radius:50%;box-sizing:border-box;"><i style="position:absolute;left:2.5px;top:5.5px;width:8px;height:2px;background:#666"></i><i style="position:absolute;left:5.5px;top:2.5px;width:2px;height:8px;background:#666"></i></div>
<div style="left:1485px;top:818px;width:2px;height:2px;background:#b5b5b5;border-radius:1px;"></div>
<div style="left:1485px;top:823px;width:2px;height:2px;background:#b5b5b5;border-radius:1px;"></div>
<div style="left:1485px;top:828px;width:2px;height:2px;background:#b5b5b5;border-radius:1px;"></div>
<div style="left:1502px;top:817px;width:15px;height:15px;background:#fff;border:1px solid #b4b4b4;box-sizing:border-box;"><svg width="13" height="13" viewBox="0 0 13 13" style="position:absolute;left:0;top:0"><path d="M8.5 3V10L4 6.5Z" fill="#555"/></svg></div>
<div style="left:1517px;top:817px;width:44px;height:15px;background:#fff;border:1px solid #b4b4b4;box-sizing:border-box;"></div>
<div style="left:1562px;top:817px;width:15px;height:15px;background:#fff;border:1px solid #b4b4b4;box-sizing:border-box;"><svg width="13" height="13" viewBox="0 0 13 13" style="position:absolute;left:0;top:0"><path d="M4.5 3V10L9 6.5Z" fill="#555"/></svg></div>
<div style="left:0px;top:838px;width:1600px;height:22px;background:#f3f2f1;"></div>
<div style="left:0px;top:838px;width:1600px;height:1px;background:#c8c8c8;"></div>
<div style="left:7px;top:840px;width:40px;height:20px;color:#444;font-size:11.4px;line-height:20px;">Listo</div>
<svg style="position:absolute;left:51px;top:842px" width="15" height="14" viewBox="0 0 15 14" fill="none" stroke="#555" stroke-width="1"><rect x="0.5" y="1.5" width="13" height="10"/><path d="M0.5 4H13.5M2.5 6.5H6M2.5 8.5H5"/><circle cx="10.5" cy="9.5" r="3" fill="#f3f2f1"/><circle cx="10.5" cy="9.5" r="1.2" fill="#555"/></svg>
<svg style="position:absolute;left:81px;top:842px" width="17" height="15" viewBox="0 0 17 15" fill="none" stroke="#555" stroke-width="1.1"><path d="M7 1V4M3.5 5.5C5.5 6.5 8.5 6.5 10.5 5.5M7 6.3V9L5 12.5M7 9L8 10.5"/><path d="M11 9.5L15.5 14M15.5 9.5L11 14" stroke-width="1.3"/><path d="M4 2.2A6 6 0 0 0 3 11.5" stroke-dasharray="2 1.4"/></svg>
<div style="left:100px;top:840px;width:220px;height:20px;color:#444;font-size:11.3px;line-height:20px;white-space:nowrap;">Accesibilidad: es necesario investigar</div>
<div style="left:1306px;top:839px;width:40px;height:21px;background:#d2d2d2;"></div>
<svg style="position:absolute;left:1319px;top:842px" width="14" height="14" viewBox="0 0 14 14" fill="none" stroke="#555" stroke-width="1"><rect x="0.5" y="0.5" width="12" height="12"/><path d="M4.5 0.5V12.5M8.5 0.5V12.5M0.5 4.5H12.5M0.5 8.5H12.5"/></svg>
<svg style="position:absolute;left:1359px;top:842px" width="14" height="14" viewBox="0 0 14 14" fill="none" stroke="#555" stroke-width="1"><rect x="0.5" y="0.5" width="13" height="12"/><rect x="3" y="3" width="8" height="7"/><path d="M4.5 5H9.5M4.5 6.5H9.5M4.5 8H9.5"/></svg>
<svg style="position:absolute;left:1399px;top:842px" width="14" height="14" viewBox="0 0 14 14" fill="none" stroke="#555" stroke-width="1"><rect x="0.5" y="0.5" width="13" height="12"/><path d="M4.5 0.5V6.5H9V0.5M0.5 6.5H13.5"/></svg>
<div style="left:1432px;top:849px;width:8px;height:1px;background:#555;"></div>
<div style="left:1445px;top:849px;width:100px;height:1px;background:#b0b0b0;"></div>
<div style="left:1495px;top:846px;width:1px;height:6px;background:#b0b0b0;"></div>
<div style="left:1482px;top:844px;width:4px;height:11px;background:#777;"></div>
<div style="left:1549px;top:849px;width:8px;height:1px;background:#555;"></div>
<div style="left:1552.5px;top:845.5px;width:1px;height:8px;background:#555;"></div>
<div style="left:1571px;top:840px;width:30px;height:20px;color:#555;font-size:11px;line-height:20px;letter-spacing:-0.3px;">80%</div>
<div style="left:0px;top:860px;width:1600px;height:40px;background:#d6d6d6;"></div>
<div style="left:588px;top:860px;width:48px;height:40px;background:#ececec;"></div>
<div style="left:298px;top:898px;width:40px;height:2px;background:#0b74d9;"></div>
<div style="left:445px;top:898px;width:40px;height:2px;background:#0b74d9;"></div>
<div style="left:494px;top:898px;width:40px;height:2px;background:#0b74d9;"></div>
<div style="left:543px;top:898px;width:40px;height:2px;background:#0b74d9;"></div>
<div style="left:588px;top:898px;width:48px;height:2px;background:#0b74d9;"></div>
<svg style="position:absolute;left:16px;top:872px" width="17" height="17" viewBox="0 0 17 17"><path d="M0 2.4L7 1.4V8H0ZM8 1.2L17 0V8H8ZM0 9H7V15.6L0 14.6ZM8 9H17V17L8 15.8Z" fill="#000"/></svg>
<svg style="position:absolute;left:60px;top:868px" width="24" height="24" viewBox="0 0 24 24"><circle cx="14.5" cy="9.5" r="7.5" fill="none" stroke="#000" stroke-width="2.2"/><path d="M9 15L2.5 22" stroke="#000" stroke-width="3" stroke-linecap="round"/></svg>
<svg style="position:absolute;left:110px;top:872px" width="19" height="17" viewBox="0 0 19 17"><g fill="none" stroke="#000" stroke-width="1.6"><rect x="3.5" y="4" width="9" height="8.5"/><path d="M1 1H13M1 15.5H13M16 4V6.5M16 9V12.5"/></g><rect x="1" y="0" width="1.8" height="2.5"/><rect x="1" y="14.5" width="1.8" height="2.5"/><rect x="11.5" y="0" width="1.8" height="2.5"/><rect x="11.5" y="14.5" width="1.8" height="2.5"/></svg>
<svg style="position:absolute;left:158px;top:868px" width="26" height="24" viewBox="0 0 26 24"><defs><linearGradient id="cp1" x1="0.2" y1="0" x2="0.6" y2="1"><stop offset="0" stop-color="#2f8fe6"/><stop offset=".4" stop-color="#36c3c0"/><stop offset=".75" stop-color="#9bd94a"/><stop offset="1" stop-color="#f3c83a"/></linearGradient>
<linearGradient id="cp2" x1="0.4" y1="0" x2="0.7" y2="1"><stop offset="0" stop-color="#7a5cf5"/><stop offset=".45" stop-color="#c45bd6"/><stop offset=".8" stop-color="#f0627e"/><stop offset="1" stop-color="#f59a4a"/></linearGradient></defs>
<path d="M8.5 1.5H15.5C18 1.5 19 3.5 18.3 5.5L14.8 18C14 21 12.5 22.5 10 22.5H4.5C1.5 22.5 0.3 20.3 1 18L4.5 6C5.3 3 6.3 1.5 8.5 1.5Z" fill="url(#cp1)"/>
<path d="M11.5 5.5C12.3 3 13.3 1.5 15.5 1.5H21.5C24.5 1.5 25.7 3.7 25 6L21.5 18C20.7 21 19.7 22.5 17.5 22.5H10.5C8 22.5 7 20.5 7.7 18.5Z" fill="url(#cp2)"/>
<path d="M12.2 6.2H17.8L14.2 17.8H8.4Z" fill="#fff" opacity=".8"/><path d="M12.5 7L17 7L15.5 12Z" fill="#6aa6f5" opacity=".55"/></svg>
<svg style="position:absolute;left:208px;top:868px" width="24" height="24" viewBox="0 0 24 24"><defs><linearGradient id="eg1" x1="0" y1="0" x2="0.3" y2="1"><stop offset="0" stop-color="#2a9be0"/><stop offset="1" stop-color="#114a9a"/></linearGradient><linearGradient id="eg2" x1="0" y1="0.3" x2="1" y2="0.2"><stop offset="0" stop-color="#35b8f0"/><stop offset=".55" stop-color="#39c8a8"/><stop offset="1" stop-color="#63d55a"/></linearGradient></defs>
<path d="M12 0.5C19 0.5 23.7 6 23.7 11.5C23.7 15.2 21 17 18.3 17C15 17 13.6 15.4 13.6 14.2C13.6 13.2 14.8 12.6 14.8 11C14.8 8.6 12.6 7.2 10.3 7.2C5 7.2 1 11 0.4 13.5C0.2 6 5 0.5 12 0.5Z" fill="url(#eg2)"/>
<path d="M10.3 7.2C6 7.2 0.4 10.5 0.4 13.5C0.8 19.5 6 23.6 12 23.6C15.5 23.6 18.8 22 21 19.3C19.5 20.3 17.5 20.6 16 20.4C11.5 19.8 8.6 16.2 8.8 12.6C8.9 10.4 9.6 8.4 10.3 7.2Z" fill="url(#eg1)"/>
<path d="M9.6 8.6C7.8 11.5 8.4 17.5 13.5 19.8C16 20.9 19 20.6 21 19.3C21.6 18.5 21.4 17.6 20.5 18C19 18.7 17 18.8 15.3 18.1C11.8 16.6 11.2 12.5 12.6 10.8C12 9.3 10.8 8.5 9.6 8.6Z" fill="#0c59a4"/></svg>
<svg style="position:absolute;left:257px;top:868px" width="24" height="24" viewBox="0 0 24 24"><circle cx="12" cy="12" r="12" fill="#db4437"/>
<path d="M12 12L1.6 6A12 12 0 0 0 8.2 23.4Z" fill="#0f9d58"/>
<path d="M12 12L8.2 23.4A12 12 0 0 0 22.4 6H12Z" fill="#ffcd40"/>
<path d="M1.6 6A12 12 0 0 1 22.4 6H12Z" fill="#db4437"/>
<circle cx="12" cy="12" r="5.4" fill="#fff"/><circle cx="12" cy="12" r="4.3" fill="#4285f4"/></svg>
<svg style="position:absolute;left:305px;top:869px" width="25" height="22" viewBox="0 0 25 22"><path d="M1 3C1 2 2 1.5 3 1.5H9L11 4H22C23 4 24 5 24 6V9H1Z" fill="#e9a820"/><rect x="1" y="6" width="23" height="14" rx="1.2" fill="#fcd667"/><path d="M6.5 20V14C6.5 13 7 12.5 8 12.5H17C18 12.5 18.5 13 18.5 14V20H15.5V16H9.5V20Z" fill="#2b88d8"/><rect x="6" y="19.5" width="13" height="2" fill="#1b6fc0"/></svg>
<svg style="position:absolute;left:355px;top:868px" width="25" height="24" viewBox="0 0 25 24"><path d="M7 3L17 0.5L24.5 5V18L17 23L7 20Z" fill="#28a8ea"/><path d="M17 0.5L24.5 5V11L17 12Z" fill="#50d9ff"/><path d="M7 12L24.5 11V18L17 23L7 20Z" fill="#0a5ea8"/><path d="M12 14L24.5 11V18L17 23Z" fill="#1490df"/><rect x="0" y="6" width="13" height="13" rx="1.5" fill="#0f6cbd"/><ellipse cx="6.5" cy="12.5" rx="3.2" ry="3.7" fill="none" stroke="#fff" stroke-width="1.7"/></svg>
<svg style="position:absolute;left:404px;top:868px" width="24" height="24" viewBox="0 0 24 24"><circle cx="12" cy="12" r="12" fill="#000"/><path d="M13 5V14.5A2.8 2.8 0 1 1 10.5 11.8" fill="none" stroke="#25f4ee" stroke-width="2.2" transform="translate(-0.7 -0.5)"/><path d="M13 5V14.5A2.8 2.8 0 1 1 10.5 11.8" fill="none" stroke="#fe2c55" stroke-width="2.2" transform="translate(0.7 0.5)"/><path d="M13 5V14.5A2.8 2.8 0 1 1 10.5 11.8M13 5.5C13.5 8 15 9 17.5 9.2" fill="none" stroke="#fff" stroke-width="2.2"/></svg>
<svg style="position:absolute;left:452px;top:868px" width="34" height="28" viewBox="0 0 34 28"><path d="M2.5 23L4.2 17A10 10 0 1 1 8.2 21Z" fill="none" stroke="#2e9e6a" stroke-width="2.2" stroke-linejoin="round"/><path d="M8.5 7.5C9 6.5 10 6.5 10.5 7.5L11.3 9.5L10.3 11C11.3 13 12.8 14.3 14.8 15.2L16.2 14L18.3 15C19 15.5 18.8 16.5 18 17.2C15 19 8.5 14.5 8.5 7.5Z" fill="#2e9e6a"/><circle cx="25.5" cy="19.5" r="7.3" fill="#dcdcdc" stroke="#444" stroke-width="1"/><text x="25.5" y="24" font-size="12" font-family="Liberation Sans, sans-serif" text-anchor="middle" fill="#111">1</text></svg>
<svg style="position:absolute;left:502px;top:868px" width="24" height="24" viewBox="0 0 24 24"><circle cx="12" cy="12" r="12" fill="#db4437"/>
<path d="M12 12L1.6 6A12 12 0 0 0 8.2 23.4Z" fill="#0f9d58"/>
<path d="M12 12L8.2 23.4A12 12 0 0 0 22.4 6H12Z" fill="#ffcd40"/>
<path d="M1.6 6A12 12 0 0 1 22.4 6H12Z" fill="#db4437"/>
<circle cx="12" cy="12" r="5.4" fill="#fff"/><circle cx="12" cy="12" r="4.3" fill="#4285f4"/></svg>
<svg style="position:absolute;left:514px;top:879px" width="15" height="15" viewBox="0 0 15 15"><circle cx="7.5" cy="7.5" r="7" fill="#c9d2d6" stroke="#8a8f93" stroke-width=".6"/><circle cx="7" cy="5.5" r="2.5" fill="#5b6b73"/><path d="M2.5 12.5C3 9 11 9 12 12.5A7 7 0 0 1 2.5 12.5Z" fill="#f4f4f4"/></svg>
<svg style="position:absolute;left:551px;top:868px" width="24" height="24" viewBox="0 0 24 24"><circle cx="12" cy="12" r="12" fill="#db4437"/>
<path d="M12 12L1.6 6A12 12 0 0 0 8.2 23.4Z" fill="#0f9d58"/>
<path d="M12 12L8.2 23.4A12 12 0 0 0 22.4 6H12Z" fill="#ffcd40"/>
<path d="M1.6 6A12 12 0 0 1 22.4 6H12Z" fill="#db4437"/>
<circle cx="12" cy="12" r="5.4" fill="#fff"/><circle cx="12" cy="12" r="4.3" fill="#4285f4"/></svg>
<svg style="position:absolute;left:564px;top:880px" width="14" height="14" viewBox="0 0 14 14"><circle cx="7" cy="7" r="6.8" fill="#fff"/><path d="M3.5 10.5V3.5L7 8L10.5 3.5V10.5" fill="none" stroke="#e8622c" stroke-width="1.5"/><path d="M10.5 3.5V10.5" stroke="#f0b020" stroke-width="1.5"/></svg>
<svg style="position:absolute;left:599px;top:869px" width="26" height="22" viewBox="0 0 26 22"><rect x="8" y="0" width="17" height="22" rx="1.5" fill="#21a366"/><rect x="16.5" y="0" width="8.5" height="5.5" fill="#33c481"/><rect x="8" y="5.5" width="8.5" height="5.5" fill="#107c41"/><rect x="16.5" y="5.5" width="8.5" height="5.5" fill="#21a366"/><rect x="8" y="11" width="8.5" height="5.5" fill="#185c37"/><rect x="16.5" y="11" width="8.5" height="5.5" fill="#107c41"/><rect x="8" y="16.5" width="17" height="5.5" fill="#185c37"/><rect x="0" y="5" width="12.5" height="12.5" rx="1.2" fill="#107c41"/><path d="M3.5 8L9 14.5M9 8L3.5 14.5" stroke="#fff" stroke-width="1.8"/></svg>
<svg style="position:absolute;left:1326px;top:875px" width="13" height="9" viewBox="0 0 13 9"><path d="M1 7.5L6.5 1.5L12 7.5" fill="none" stroke="#000" stroke-width="1.4"/></svg>
<svg style="position:absolute;left:1350px;top:871px" width="15" height="18" viewBox="0 0 15 18"><rect x="2.5" y="5.5" width="7" height="6.5" rx="1" fill="none" stroke="#000" stroke-width="1.3"/><path d="M9.5 8L13 6V11.5L9.5 9.5" fill="none" stroke="#000" stroke-width="1.2"/><path d="M3 3.5C5 1.5 9 1.5 11 3.5M3 14.5C5 16.5 9 16.5 11 14.5" fill="none" stroke="#000" stroke-width="1"/></svg>
<svg style="position:absolute;left:1372px;top:874px" width="18" height="12" viewBox="0 0 18 12"><rect x="5.5" y="2.5" width="11" height="7" fill="none" stroke="#000" stroke-width="1.2"/><rect x="7" y="4" width="8" height="4" fill="#000"/><rect x="16.8" y="4.5" width="1.2" height="3" fill="#000"/><path d="M0.5 3V5.5C0.5 7 2 7.5 3 7.5V10H4.5V7.5C5 7.5 6 7 6 5.5V3M1.8 0.5V3M4.6 0.5V3" fill="none" stroke="#000" stroke-width="1.1"/></svg>
<svg style="position:absolute;left:1398px;top:873px" width="16" height="15" viewBox="0 0 16 15"><g fill="none" stroke="#000" stroke-width="1.2"><path d="M2 13.5A11.5 11.5 0 0 1 13.5 2"/><path d="M5.2 13.5A8.3 8.3 0 0 1 13.5 5.2"/><path d="M8.4 13.5A5.1 5.1 0 0 1 13.5 8.4"/></g><circle cx="12.3" cy="12.3" r="1.7"/></svg>
<svg style="position:absolute;left:1420px;top:872px" width="18" height="16" viewBox="0 0 18 16"><path d="M1 5.5H4L8 2V14L4 10.5H1Z" fill="none" stroke="#000" stroke-width="1.2"/><g fill="none" stroke="#000" stroke-width="1.1"><path d="M10.3 5.5A3.5 3.5 0 0 1 10.3 10.5"/><path d="M12.3 3.5A6 6 0 0 1 12.3 12.5"/><path d="M14.5 1.5A9 9 0 0 1 14.5 14.5" opacity=".45"/></g></svg>
<div style="left:1449px;top:870px;width:24px;height:20px;font-size:10.4px;line-height:20px;color:#000;letter-spacing:-0.55px;">ESP</div>
<div style="left:1476px;top:862px;width:70px;height:18px;font-size:11.5px;line-height:18px;color:#000;text-align:center;">22:33</div>
<div style="left:1476px;top:879px;width:70px;height:18px;font-size:11.3px;line-height:18px;color:#000;text-align:center;">01-10-2025</div>
<svg style="position:absolute;left:1558px;top:871px" width="26" height="26" viewBox="0 0 26 26"><path d="M1 1H17V12.5H11L8 16V12.5H1Z" fill="#000"/><path d="M4 4.5H14M4 7H14M4 9.5H14" stroke="#d6d6d6" stroke-width="1"/><circle cx="16" cy="16" r="7" fill="#d9d9d9" stroke="#555" stroke-width="1"/><text x="16" y="20" font-size="11" font-family="Liberation Sans, sans-serif" text-anchor="middle" fill="#111">3</text></svg>
<div style="left:1595px;top:860px;width:1px;height:40px;background:#a8a8a8;"></div>
<svg style="position:absolute;left:1332px;top:198px" width="60" height="60" viewBox="0 0 60 60"><rect x="3.5" y="15.5" width="52" height="33" rx="3" fill="#c9ced3" stroke="#23272e" stroke-width="2"/>
<rect x="7" y="19.5" width="45" height="26" fill="#5fc3ef"/>
<path d="M1 48.5H58V51C58 54.5 55.5 57 52 57H7C3.5 57 1 54.5 1 51Z" fill="#8d969d" stroke="#23272e" stroke-width="2"/>
<rect x="22" y="49.5" width="14" height="3" rx="1.5" fill="#f2c94c" stroke="#23272e" stroke-width="0.9"/>
<path d="M10.5 30H17M10.5 33.5H16.5" stroke="#1f4e79" stroke-width="1.5"/><path d="M35.5 41.5H48" stroke="#1f4e79" stroke-width="1.8" stroke-dasharray="1.8 1.5"/>
<path d="M3 8.5H16.5C17.6 8.5 18.5 9.4 18.5 10.5V17.5C18.5 18.6 17.6 19.5 16.5 19.5H12.5L10.5 24L8.5 19.5H3C1.9 19.5 1 18.6 1 17.5V10.5C1 9.4 1.9 8.5 3 8.5Z" fill="#f6c744" stroke="#23272e" stroke-width="1.5"/><path d="M4 12H15.5M4 15.5H12M13.5 15.5H15.5" stroke="#6b4a10" stroke-width="1.4"/>
<circle cx="40.5" cy="19.5" r="15.5" fill="#fdf6ee"/>
<path d="M31.5 27C29.5 10 34 1 40.5 1C47 1 51.5 10 49.5 27L48 32H33Z" fill="#5a5c63" stroke="#23272e" stroke-width="1"/>
<ellipse cx="40.5" cy="12.5" rx="4.6" ry="5.6" fill="#f6d3bd"/><rect x="38.8" y="17" width="3.4" height="4" fill="#f6d3bd"/>
<path d="M29.5 31C30 25 34 23.5 37.5 22.5L40.5 25.5L43.5 22.5C47 23.5 51 25 51.5 31C48 35 33 35 29.5 31Z" fill="#f0675a"/>
<path d="M37.5 22.5L40.5 26L43.5 22.5L42.5 20.5H38.5Z" fill="#fff"/><path d="M39.8 26H41.2L42 33.5H39Z" fill="#f2b33d"/>
<circle cx="40.5" cy="19.5" r="15.6" fill="none" stroke="#23272e" stroke-width="5"/><circle cx="40.5" cy="19.5" r="15.6" fill="none" stroke="#f5d04f" stroke-width="2.6"/>
<path d="M31 6C33 1.5 37 0.8 40.5 0.8C44 0.8 48 1.5 50 6C47 3.8 44 3.2 40.5 3.2C37 3.2 34 3.8 31 6Z" fill="#5a5c63" stroke="#23272e" stroke-width="0.8"/>
<path d="M28.5 32.5L16 45" stroke="#23272e" stroke-width="7.6" stroke-linecap="round"/><path d="M28.5 32.5L16 45" stroke="#d9a066" stroke-width="5" stroke-linecap="round"/>
<path d="M25 36L18 43" stroke="#7a4a1c" stroke-width="1.3" stroke-dasharray="1.3 2"/></svg>
</div></body></html>
